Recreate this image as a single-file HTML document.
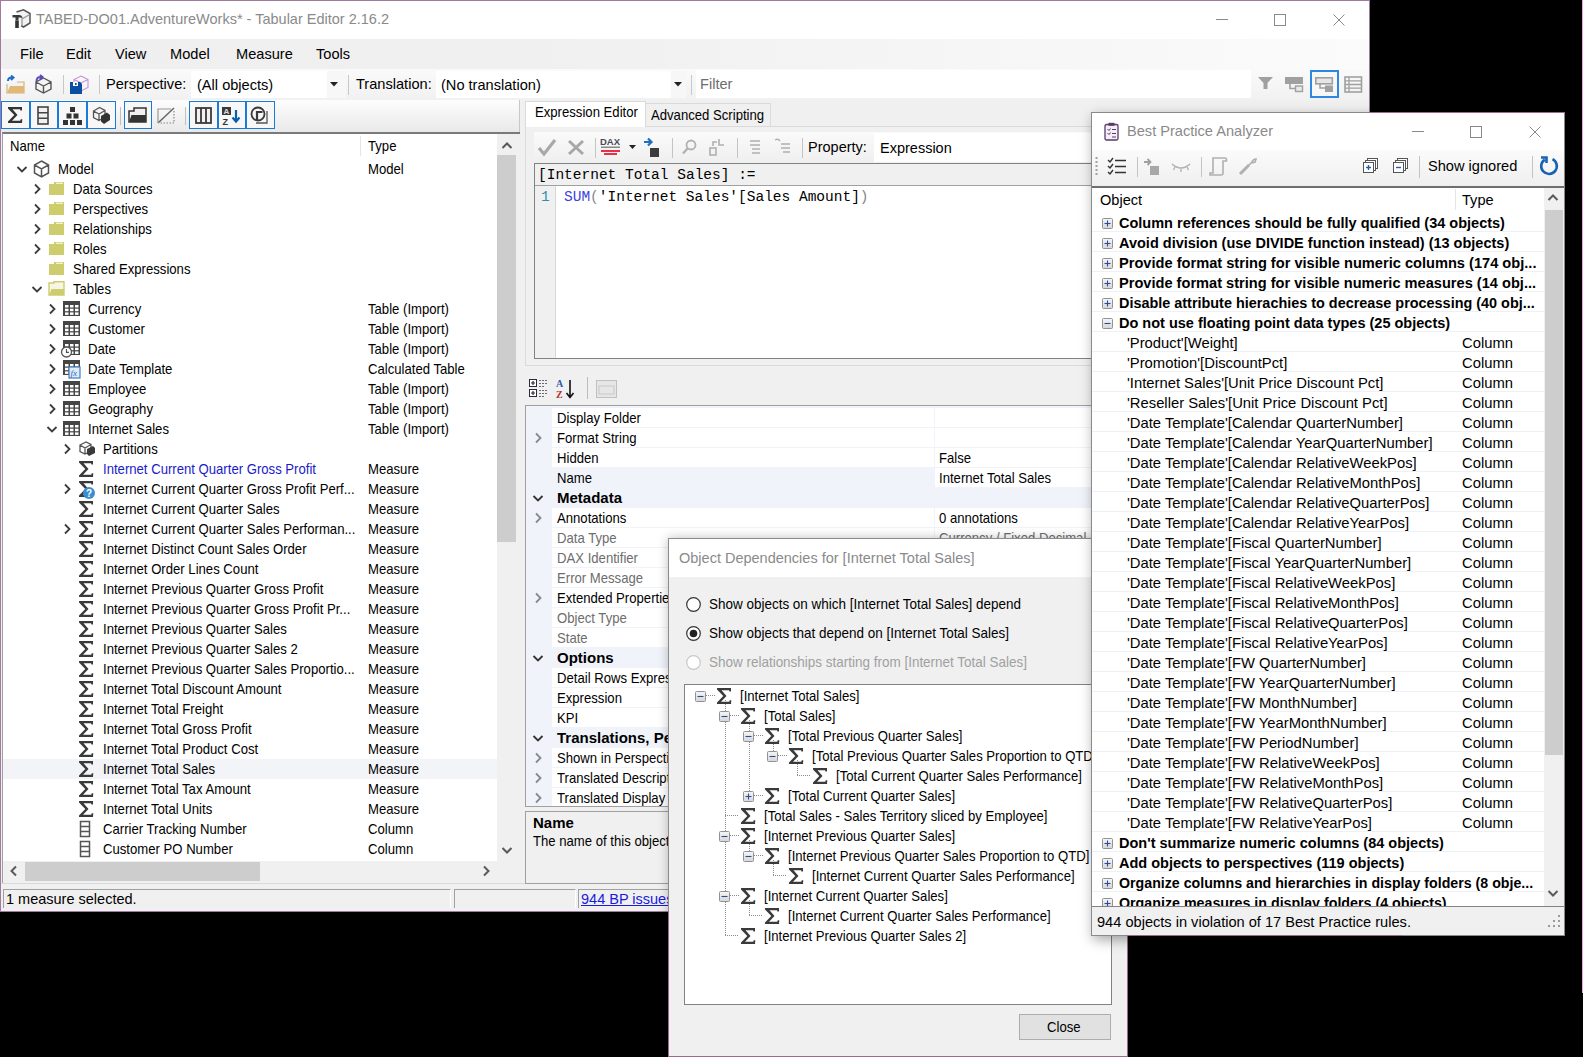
<!DOCTYPE html><html><head><meta charset="utf-8"><style>
*{margin:0;padding:0;box-sizing:border-box}
html,body{width:1583px;height:1057px;overflow:hidden;background:#000;position:relative;font-family:"Liberation Sans",sans-serif;color:#000}
.a{position:absolute}
.t{position:absolute;white-space:nowrap;font-size:15px;line-height:20px;transform:scaleX(0.875);transform-origin:0 0}
.s{position:absolute;white-space:nowrap;font-size:14.6px;line-height:20px}
.b{font-weight:bold}
svg{position:absolute;overflow:visible}
</style></head><body>
<div class="a" style="left:0;top:0;width:1370px;height:912px;background:#f0f0f0;border:1px solid #a07aa0"></div>
<div class="a" style="left:1px;top:1px;width:1368px;height:38px;background:#fff"></div>
<div class="s" style="left:36px;top:9px;color:#8a8a8a;font-size:14.5px">TABED-DO01.AdventureWorks* - Tabular Editor 2.16.2</div>
<svg style="left:1216px;top:19px" width="12" height="1" viewBox="0 0 12 1" ><rect width="12" height="1" fill="#8a8a8a"/></svg>
<svg style="left:1274px;top:14px" width="12" height="12" viewBox="0 0 12 12" ><rect x="0.5" y="0.5" width="11" height="11" fill="none" stroke="#8a8a8a" stroke-width="1"/></svg>
<svg style="left:1333px;top:14px" width="12" height="12" viewBox="0 0 12 12" ><path d="M0.5 0.5 L11.5 11.5 M11.5 0.5 L0.5 11.5" stroke="#8a8a8a" stroke-width="1"/></svg>
<div class="a" style="left:1px;top:39px;width:1368px;height:30px;background:linear-gradient(90deg,#efefef 0,#f0f0f0 40%,#fbfbfb 100%)"></div>
<div class="s" style="left:20px;top:44px;">File</div>
<div class="s" style="left:66px;top:44px;">Edit</div>
<div class="s" style="left:115px;top:44px;">View</div>
<div class="s" style="left:170px;top:44px;">Model</div>
<div class="s" style="left:236px;top:44px;">Measure</div>
<div class="s" style="left:316px;top:44px;">Tools</div>
<div class="a" style="left:1px;top:69px;width:1368px;height:31px;background:linear-gradient(#fafafa,#f1f1f1)"></div>
<div class="s" style="left:106px;top:74px;">Perspective:</div>
<div class="a" style="left:191px;top:71px;width:155px;height:27px;background:#fff"></div>
<div class="a" style="left:327px;top:71px;width:19px;height:27px;background:#f7f7f7"></div>
<svg style="left:330px;top:82px" width="8" height="5" viewBox="0 0 8 5" ><path d="M0 0 L8 0 L4 4.5 Z" fill="#222"/></svg>
<div class="s" style="left:197px;top:75px;">(All objects)</div>
<div class="a" style="left:348px;top:75px;width:1px;height:20px;background:#c8c8c8"></div>
<div class="s" style="left:356px;top:74px;">Translation:</div>
<div class="a" style="left:436px;top:71px;width:250px;height:27px;background:#fff"></div>
<div class="a" style="left:671px;top:71px;width:15px;height:27px;background:#f7f7f7"></div>
<svg style="left:674px;top:82px" width="8" height="5" viewBox="0 0 8 5" ><path d="M0 0 L8 0 L4 4.5 Z" fill="#222"/></svg>
<div class="s" style="left:441px;top:75px;">(No translation)</div>
<div class="a" style="left:691px;top:75px;width:1px;height:20px;background:#c8c8c8"></div>
<div class="a" style="left:696px;top:70px;width:555px;height:28px;background:#fff"></div>
<div class="s" style="left:700px;top:74px;color:#6d6d6d">Filter</div>
<div class="a" style="left:1px;top:100px;width:519px;height:32px;background:linear-gradient(#fdfdfd,#e9e9e9);border-right:1px solid #c8c8c8"></div>
<div class="a" style="left:1px;top:101px;width:29px;height:28px;border:1px solid #1a7ad8;background:#f7f7f7"></div>
<div class="a" style="left:30px;top:101px;width:28px;height:28px;border:1px solid #1a7ad8;background:#f7f7f7"></div>
<div class="a" style="left:58px;top:101px;width:29px;height:28px;border:1px solid #1a7ad8;background:#f7f7f7"></div>
<div class="a" style="left:87px;top:101px;width:29px;height:28px;border:1px solid #1a7ad8;background:#f7f7f7"></div>
<div class="a" style="left:124px;top:101px;width:28px;height:28px;border:1px solid #1a7ad8;background:#f7f7f7"></div>
<div class="a" style="left:189px;top:101px;width:29px;height:28px;border:1px solid #1a7ad8;background:#f7f7f7"></div>
<div class="a" style="left:218px;top:101px;width:28px;height:28px;border:1px solid #1a7ad8;background:#f7f7f7"></div>
<div class="a" style="left:246px;top:101px;width:29px;height:28px;border:1px solid #1a7ad8;background:#f7f7f7"></div>
<div class="a" style="left:120px;top:107px;width:1px;height:18px;background:#c0c0c0"></div>
<div class="a" style="left:185px;top:107px;width:1px;height:18px;background:#c0c0c0"></div>
<div class="a" style="left:2px;top:132px;width:518px;height:751px;background:#f0f0f0;border-top:2px solid #7a7a7a;border-left:1px solid #a0a0a0"></div>
<div class="a" style="left:3px;top:134px;width:494px;height:727px;background:#fff"></div>
<div class="t" style="left:10px;top:136px;">Name</div>
<div class="t" style="left:368px;top:136px;">Type</div>
<div class="a" style="left:360px;top:136px;width:1px;height:20px;background:#e5e5e5"></div>
<div class="a" style="left:497px;top:134px;width:20px;height:727px;background:#f0f0f0"></div>
<div class="a" style="left:497px;top:155px;width:19px;height:387px;background:#cdcdcd"></div>
<svg style="left:501px;top:142px" width="12" height="8" viewBox="0 0 12 8" ><path d="M1.5 6 L6 1.5 L10.5 6" fill="none" stroke="#5a5a5a" stroke-width="2"/></svg>
<svg style="left:501px;top:846px" width="12" height="8" viewBox="0 0 12 8" ><path d="M1.5 2 L6 6.5 L10.5 2" fill="none" stroke="#5a5a5a" stroke-width="2"/></svg>
<div class="a" style="left:3px;top:861px;width:494px;height:20px;background:#f0f0f0"></div>
<div class="a" style="left:25px;top:862px;width:235px;height:19px;background:#cdcdcd"></div>
<svg style="left:10px;top:865px" width="8" height="12" viewBox="0 0 8 12" ><path d="M6 1.5 L1.5 6 L6 10.5" fill="none" stroke="#5a5a5a" stroke-width="2"/></svg>
<svg style="left:482px;top:865px" width="8" height="12" viewBox="0 0 8 12" ><path d="M2 1.5 L6.5 6 L2 10.5" fill="none" stroke="#5a5a5a" stroke-width="2"/></svg>
<svg style="left:16px;top:165px" width="12" height="8" viewBox="0 0 12 8" ><path d="M1.5 2 L6 6.5 L10.5 2" fill="none" stroke="#3c3c3c" stroke-width="1.8"/></svg>
<svg style="left:33px;top:160px" width="17" height="18" viewBox="0 0 17 18" ><path d="M8.5 1 L15.5 5 L15.5 13 L8.5 17 L1.5 13 L1.5 5 Z M1.5 5 L8.5 9 L15.5 5 M8.5 9 L8.5 17" fill="none" stroke="#555" stroke-width="1.5"/></svg>
<div class="t" style="left:58px;top:159px;">Model</div>
<div class="t" style="left:368px;top:159px;">Model</div>
<svg style="left:33px;top:183px" width="8" height="12" viewBox="0 0 8 12" ><path d="M2 1.5 L6.5 6 L2 10.5" fill="none" stroke="#3c3c3c" stroke-width="1.8"/></svg>
<svg style="left:48px;top:181px" width="17" height="15" viewBox="0 0 17 15" ><path d="M1 3 L6 3 L6 1 L16 1 L16 14 L1 14 Z" fill="#cdcd6e"/><path d="M8 2.2 L15 2.2" stroke="#fff" stroke-width="1"/></svg>
<div class="t" style="left:73px;top:179px;">Data Sources</div>
<svg style="left:33px;top:203px" width="8" height="12" viewBox="0 0 8 12" ><path d="M2 1.5 L6.5 6 L2 10.5" fill="none" stroke="#3c3c3c" stroke-width="1.8"/></svg>
<svg style="left:48px;top:201px" width="17" height="15" viewBox="0 0 17 15" ><path d="M1 3 L6 3 L6 1 L16 1 L16 14 L1 14 Z" fill="#cdcd6e"/><path d="M8 2.2 L15 2.2" stroke="#fff" stroke-width="1"/></svg>
<div class="t" style="left:73px;top:199px;">Perspectives</div>
<svg style="left:33px;top:223px" width="8" height="12" viewBox="0 0 8 12" ><path d="M2 1.5 L6.5 6 L2 10.5" fill="none" stroke="#3c3c3c" stroke-width="1.8"/></svg>
<svg style="left:48px;top:221px" width="17" height="15" viewBox="0 0 17 15" ><path d="M1 3 L6 3 L6 1 L16 1 L16 14 L1 14 Z" fill="#cdcd6e"/><path d="M8 2.2 L15 2.2" stroke="#fff" stroke-width="1"/></svg>
<div class="t" style="left:73px;top:219px;">Relationships</div>
<svg style="left:33px;top:243px" width="8" height="12" viewBox="0 0 8 12" ><path d="M2 1.5 L6.5 6 L2 10.5" fill="none" stroke="#3c3c3c" stroke-width="1.8"/></svg>
<svg style="left:48px;top:241px" width="17" height="15" viewBox="0 0 17 15" ><path d="M1 3 L6 3 L6 1 L16 1 L16 14 L1 14 Z" fill="#cdcd6e"/><path d="M8 2.2 L15 2.2" stroke="#fff" stroke-width="1"/></svg>
<div class="t" style="left:73px;top:239px;">Roles</div>
<svg style="left:48px;top:261px" width="17" height="15" viewBox="0 0 17 15" ><path d="M1 3 L6 3 L6 1 L16 1 L16 14 L1 14 Z" fill="#cdcd6e"/><path d="M8 2.2 L15 2.2" stroke="#fff" stroke-width="1"/></svg>
<div class="t" style="left:73px;top:259px;">Shared Expressions</div>
<svg style="left:31px;top:285px" width="12" height="8" viewBox="0 0 12 8" ><path d="M1.5 2 L6 6.5 L10.5 2" fill="none" stroke="#3c3c3c" stroke-width="1.8"/></svg>
<svg style="left:48px;top:281px" width="17" height="15" viewBox="0 0 17 15" ><path d="M1 2 L6 2 L6 0.8 L16 0.8 L16 14 L1 14 Z" fill="#f6f6e6" stroke="#cdcd6e" stroke-width="1.4"/><path d="M1 14 L3.5 8 L16 8 L16 14 Z" fill="#cdcd6e"/></svg>
<div class="t" style="left:73px;top:279px;">Tables</div>
<svg style="left:48px;top:303px" width="8" height="12" viewBox="0 0 8 12" ><path d="M2 1.5 L6.5 6 L2 10.5" fill="none" stroke="#3c3c3c" stroke-width="1.8"/></svg>
<svg style="left:63px;top:301px" width="17" height="15" viewBox="0 0 17 15" ><rect x="0" y="0" width="17" height="15" fill="#454545"/><rect x="2" y="4.0" width="3.5" height="2.5" fill="#fff"/><rect x="7" y="4.0" width="3.5" height="2.5" fill="#fff"/><rect x="12" y="4.0" width="3.5" height="2.5" fill="#fff"/><rect x="2" y="7.7" width="3.5" height="2.5" fill="#fff"/><rect x="7" y="7.7" width="3.5" height="2.5" fill="#fff"/><rect x="12" y="7.7" width="3.5" height="2.5" fill="#fff"/><rect x="2" y="11.4" width="3.5" height="2.5" fill="#fff"/><rect x="7" y="11.4" width="3.5" height="2.5" fill="#fff"/><rect x="12" y="11.4" width="3.5" height="2.5" fill="#fff"/></svg>
<div class="t" style="left:88px;top:299px;">Currency</div>
<div class="t" style="left:368px;top:299px;">Table (Import)</div>
<svg style="left:48px;top:323px" width="8" height="12" viewBox="0 0 8 12" ><path d="M2 1.5 L6.5 6 L2 10.5" fill="none" stroke="#3c3c3c" stroke-width="1.8"/></svg>
<svg style="left:63px;top:321px" width="17" height="15" viewBox="0 0 17 15" ><rect x="0" y="0" width="17" height="15" fill="#454545"/><rect x="2" y="4.0" width="3.5" height="2.5" fill="#fff"/><rect x="7" y="4.0" width="3.5" height="2.5" fill="#fff"/><rect x="12" y="4.0" width="3.5" height="2.5" fill="#fff"/><rect x="2" y="7.7" width="3.5" height="2.5" fill="#fff"/><rect x="7" y="7.7" width="3.5" height="2.5" fill="#fff"/><rect x="12" y="7.7" width="3.5" height="2.5" fill="#fff"/><rect x="2" y="11.4" width="3.5" height="2.5" fill="#fff"/><rect x="7" y="11.4" width="3.5" height="2.5" fill="#fff"/><rect x="12" y="11.4" width="3.5" height="2.5" fill="#fff"/></svg>
<div class="t" style="left:88px;top:319px;">Customer</div>
<div class="t" style="left:368px;top:319px;">Table (Import)</div>
<svg style="left:48px;top:343px" width="8" height="12" viewBox="0 0 8 12" ><path d="M2 1.5 L6.5 6 L2 10.5" fill="none" stroke="#3c3c3c" stroke-width="1.8"/></svg>
<svg style="left:61px;top:340px" width="19" height="18" viewBox="0 0 19 18" ><g transform="translate(2,0)"><rect x="0" y="0" width="17" height="15" fill="#454545"/><rect x="2" y="4.0" width="3.5" height="2.5" fill="#fff"/><rect x="7" y="4.0" width="3.5" height="2.5" fill="#fff"/><rect x="12" y="4.0" width="3.5" height="2.5" fill="#fff"/><rect x="2" y="7.7" width="3.5" height="2.5" fill="#fff"/><rect x="7" y="7.7" width="3.5" height="2.5" fill="#fff"/><rect x="12" y="7.7" width="3.5" height="2.5" fill="#fff"/><rect x="2" y="11.4" width="3.5" height="2.5" fill="#fff"/><rect x="7" y="11.4" width="3.5" height="2.5" fill="#fff"/><rect x="12" y="11.4" width="3.5" height="2.5" fill="#fff"/><circle cx="3.5" cy="12" r="5" fill="#fff" stroke="#555" stroke-width="1.3"/><path d="M3.5 9 L3.5 12.3 L6 12.3" fill="none" stroke="#555" stroke-width="1.2"/></g></svg>
<div class="t" style="left:88px;top:339px;">Date</div>
<div class="t" style="left:368px;top:339px;">Table (Import)</div>
<svg style="left:48px;top:363px" width="8" height="12" viewBox="0 0 8 12" ><path d="M2 1.5 L6.5 6 L2 10.5" fill="none" stroke="#3c3c3c" stroke-width="1.8"/></svg>
<svg style="left:63px;top:360px" width="18" height="19" viewBox="0 0 18 19" ><rect x="0" y="0" width="17" height="15" fill="#454545"/><rect x="2" y="4.0" width="3.5" height="2.5" fill="#fff"/><rect x="7" y="4.0" width="3.5" height="2.5" fill="#fff"/><rect x="12" y="4.0" width="3.5" height="2.5" fill="#fff"/><rect x="2" y="7.7" width="3.5" height="2.5" fill="#fff"/><rect x="7" y="7.7" width="3.5" height="2.5" fill="#fff"/><rect x="12" y="7.7" width="3.5" height="2.5" fill="#fff"/><rect x="2" y="11.4" width="3.5" height="2.5" fill="#fff"/><rect x="7" y="11.4" width="3.5" height="2.5" fill="#fff"/><rect x="12" y="11.4" width="3.5" height="2.5" fill="#fff"/><rect x="6" y="7" width="11" height="11" fill="#dfeaf7" stroke="#3d7fc4" stroke-width="1.2"/><text x="7.5" y="16" font-size="9" font-style="italic" fill="#2e6db5" font-family="Liberation Serif">fx</text></svg>
<div class="t" style="left:88px;top:359px;">Date Template</div>
<div class="t" style="left:368px;top:359px;">Calculated Table</div>
<svg style="left:48px;top:383px" width="8" height="12" viewBox="0 0 8 12" ><path d="M2 1.5 L6.5 6 L2 10.5" fill="none" stroke="#3c3c3c" stroke-width="1.8"/></svg>
<svg style="left:63px;top:381px" width="17" height="15" viewBox="0 0 17 15" ><rect x="0" y="0" width="17" height="15" fill="#454545"/><rect x="2" y="4.0" width="3.5" height="2.5" fill="#fff"/><rect x="7" y="4.0" width="3.5" height="2.5" fill="#fff"/><rect x="12" y="4.0" width="3.5" height="2.5" fill="#fff"/><rect x="2" y="7.7" width="3.5" height="2.5" fill="#fff"/><rect x="7" y="7.7" width="3.5" height="2.5" fill="#fff"/><rect x="12" y="7.7" width="3.5" height="2.5" fill="#fff"/><rect x="2" y="11.4" width="3.5" height="2.5" fill="#fff"/><rect x="7" y="11.4" width="3.5" height="2.5" fill="#fff"/><rect x="12" y="11.4" width="3.5" height="2.5" fill="#fff"/></svg>
<div class="t" style="left:88px;top:379px;">Employee</div>
<div class="t" style="left:368px;top:379px;">Table (Import)</div>
<svg style="left:48px;top:403px" width="8" height="12" viewBox="0 0 8 12" ><path d="M2 1.5 L6.5 6 L2 10.5" fill="none" stroke="#3c3c3c" stroke-width="1.8"/></svg>
<svg style="left:63px;top:401px" width="17" height="15" viewBox="0 0 17 15" ><rect x="0" y="0" width="17" height="15" fill="#454545"/><rect x="2" y="4.0" width="3.5" height="2.5" fill="#fff"/><rect x="7" y="4.0" width="3.5" height="2.5" fill="#fff"/><rect x="12" y="4.0" width="3.5" height="2.5" fill="#fff"/><rect x="2" y="7.7" width="3.5" height="2.5" fill="#fff"/><rect x="7" y="7.7" width="3.5" height="2.5" fill="#fff"/><rect x="12" y="7.7" width="3.5" height="2.5" fill="#fff"/><rect x="2" y="11.4" width="3.5" height="2.5" fill="#fff"/><rect x="7" y="11.4" width="3.5" height="2.5" fill="#fff"/><rect x="12" y="11.4" width="3.5" height="2.5" fill="#fff"/></svg>
<div class="t" style="left:88px;top:399px;">Geography</div>
<div class="t" style="left:368px;top:399px;">Table (Import)</div>
<svg style="left:46px;top:425px" width="12" height="8" viewBox="0 0 12 8" ><path d="M1.5 2 L6 6.5 L10.5 2" fill="none" stroke="#3c3c3c" stroke-width="1.8"/></svg>
<svg style="left:63px;top:421px" width="17" height="15" viewBox="0 0 17 15" ><rect x="0" y="0" width="17" height="15" fill="#454545"/><rect x="2" y="4.0" width="3.5" height="2.5" fill="#fff"/><rect x="7" y="4.0" width="3.5" height="2.5" fill="#fff"/><rect x="12" y="4.0" width="3.5" height="2.5" fill="#fff"/><rect x="2" y="7.7" width="3.5" height="2.5" fill="#fff"/><rect x="7" y="7.7" width="3.5" height="2.5" fill="#fff"/><rect x="12" y="7.7" width="3.5" height="2.5" fill="#fff"/><rect x="2" y="11.4" width="3.5" height="2.5" fill="#fff"/><rect x="7" y="11.4" width="3.5" height="2.5" fill="#fff"/><rect x="12" y="11.4" width="3.5" height="2.5" fill="#fff"/></svg>
<div class="t" style="left:88px;top:419px;">Internet Sales</div>
<div class="t" style="left:368px;top:419px;">Table (Import)</div>
<svg style="left:63px;top:443px" width="8" height="12" viewBox="0 0 8 12" ><path d="M2 1.5 L6.5 6 L2 10.5" fill="none" stroke="#3c3c3c" stroke-width="1.8"/></svg>
<svg style="left:78px;top:440px" width="18" height="17" viewBox="0 0 18 17" ><path d="M2 5 L8 2 L13 4.5 L13 11 L7 14 L2 11.5 Z M2 5 L7 8 L13 4.5 M7 8 L7 14" fill="none" stroke="#555" stroke-width="1.3"/><path d="M9 9 L15 6 L17 8 L17 13 L11 16 L9 14 Z" fill="#3a3a3a"/></svg>
<div class="t" style="left:103px;top:439px;">Partitions</div>
<svg style="left:78px;top:460px" width="16" height="18" viewBox="0 0 16 18" ><path d="M1 1 L15 1 L15 4.5 L13.5 4.5 L13 3.2 L5.5 3.2 L10.5 9 L5 14.8 L13.2 14.8 L13.8 13.2 L15.3 13.2 L15 17 L1 17 L1 15.5 L7.3 9 L1 2.5 Z" fill="#3a3a3a"/></svg>
<div class="t" style="left:103px;top:459px;color:#1a1ac8">Internet Current Quarter Gross Profit</div>
<div class="t" style="left:368px;top:459px;">Measure</div>
<svg style="left:63px;top:483px" width="8" height="12" viewBox="0 0 8 12" ><path d="M2 1.5 L6.5 6 L2 10.5" fill="none" stroke="#3c3c3c" stroke-width="1.8"/></svg>
<svg style="left:78px;top:480px" width="16" height="18" viewBox="0 0 16 18" ><path d="M1 1 L15 1 L15 4.5 L13.5 4.5 L13 3.2 L5.5 3.2 L10.5 9 L5 14.8 L13.2 14.8 L13.8 13.2 L15.3 13.2 L15 17 L1 17 L1 15.5 L7.3 9 L1 2.5 Z" fill="#3a3a3a"/></svg><svg style="left:83px;top:487px" width="12" height="12" viewBox="0 0 12 12" ><circle cx="6" cy="6" r="6" fill="#3b8fd0"/><text x="3" y="10" font-size="10" font-weight="bold" fill="#fff" font-family="Liberation Sans">?</text></svg>
<div class="t" style="left:103px;top:479px;">Internet Current Quarter Gross Profit Perf...</div>
<div class="t" style="left:368px;top:479px;">Measure</div>
<svg style="left:78px;top:500px" width="16" height="18" viewBox="0 0 16 18" ><path d="M1 1 L15 1 L15 4.5 L13.5 4.5 L13 3.2 L5.5 3.2 L10.5 9 L5 14.8 L13.2 14.8 L13.8 13.2 L15.3 13.2 L15 17 L1 17 L1 15.5 L7.3 9 L1 2.5 Z" fill="#3a3a3a"/></svg>
<div class="t" style="left:103px;top:499px;">Internet Current Quarter Sales</div>
<div class="t" style="left:368px;top:499px;">Measure</div>
<svg style="left:63px;top:523px" width="8" height="12" viewBox="0 0 8 12" ><path d="M2 1.5 L6.5 6 L2 10.5" fill="none" stroke="#3c3c3c" stroke-width="1.8"/></svg>
<svg style="left:78px;top:520px" width="16" height="18" viewBox="0 0 16 18" ><path d="M1 1 L15 1 L15 4.5 L13.5 4.5 L13 3.2 L5.5 3.2 L10.5 9 L5 14.8 L13.2 14.8 L13.8 13.2 L15.3 13.2 L15 17 L1 17 L1 15.5 L7.3 9 L1 2.5 Z" fill="#3a3a3a"/></svg>
<div class="t" style="left:103px;top:519px;">Internet Current Quarter Sales Performan...</div>
<div class="t" style="left:368px;top:519px;">Measure</div>
<svg style="left:78px;top:540px" width="16" height="18" viewBox="0 0 16 18" ><path d="M1 1 L15 1 L15 4.5 L13.5 4.5 L13 3.2 L5.5 3.2 L10.5 9 L5 14.8 L13.2 14.8 L13.8 13.2 L15.3 13.2 L15 17 L1 17 L1 15.5 L7.3 9 L1 2.5 Z" fill="#3a3a3a"/></svg>
<div class="t" style="left:103px;top:539px;">Internet Distinct Count Sales Order</div>
<div class="t" style="left:368px;top:539px;">Measure</div>
<svg style="left:78px;top:560px" width="16" height="18" viewBox="0 0 16 18" ><path d="M1 1 L15 1 L15 4.5 L13.5 4.5 L13 3.2 L5.5 3.2 L10.5 9 L5 14.8 L13.2 14.8 L13.8 13.2 L15.3 13.2 L15 17 L1 17 L1 15.5 L7.3 9 L1 2.5 Z" fill="#3a3a3a"/></svg>
<div class="t" style="left:103px;top:559px;">Internet Order Lines Count</div>
<div class="t" style="left:368px;top:559px;">Measure</div>
<svg style="left:78px;top:580px" width="16" height="18" viewBox="0 0 16 18" ><path d="M1 1 L15 1 L15 4.5 L13.5 4.5 L13 3.2 L5.5 3.2 L10.5 9 L5 14.8 L13.2 14.8 L13.8 13.2 L15.3 13.2 L15 17 L1 17 L1 15.5 L7.3 9 L1 2.5 Z" fill="#3a3a3a"/></svg>
<div class="t" style="left:103px;top:579px;">Internet Previous Quarter Gross Profit</div>
<div class="t" style="left:368px;top:579px;">Measure</div>
<svg style="left:78px;top:600px" width="16" height="18" viewBox="0 0 16 18" ><path d="M1 1 L15 1 L15 4.5 L13.5 4.5 L13 3.2 L5.5 3.2 L10.5 9 L5 14.8 L13.2 14.8 L13.8 13.2 L15.3 13.2 L15 17 L1 17 L1 15.5 L7.3 9 L1 2.5 Z" fill="#3a3a3a"/></svg>
<div class="t" style="left:103px;top:599px;">Internet Previous Quarter Gross Profit Pr...</div>
<div class="t" style="left:368px;top:599px;">Measure</div>
<svg style="left:78px;top:620px" width="16" height="18" viewBox="0 0 16 18" ><path d="M1 1 L15 1 L15 4.5 L13.5 4.5 L13 3.2 L5.5 3.2 L10.5 9 L5 14.8 L13.2 14.8 L13.8 13.2 L15.3 13.2 L15 17 L1 17 L1 15.5 L7.3 9 L1 2.5 Z" fill="#3a3a3a"/></svg>
<div class="t" style="left:103px;top:619px;">Internet Previous Quarter Sales</div>
<div class="t" style="left:368px;top:619px;">Measure</div>
<svg style="left:78px;top:640px" width="16" height="18" viewBox="0 0 16 18" ><path d="M1 1 L15 1 L15 4.5 L13.5 4.5 L13 3.2 L5.5 3.2 L10.5 9 L5 14.8 L13.2 14.8 L13.8 13.2 L15.3 13.2 L15 17 L1 17 L1 15.5 L7.3 9 L1 2.5 Z" fill="#3a3a3a"/></svg>
<div class="t" style="left:103px;top:639px;">Internet Previous Quarter Sales 2</div>
<div class="t" style="left:368px;top:639px;">Measure</div>
<svg style="left:78px;top:660px" width="16" height="18" viewBox="0 0 16 18" ><path d="M1 1 L15 1 L15 4.5 L13.5 4.5 L13 3.2 L5.5 3.2 L10.5 9 L5 14.8 L13.2 14.8 L13.8 13.2 L15.3 13.2 L15 17 L1 17 L1 15.5 L7.3 9 L1 2.5 Z" fill="#3a3a3a"/></svg>
<div class="t" style="left:103px;top:659px;">Internet Previous Quarter Sales Proportio...</div>
<div class="t" style="left:368px;top:659px;">Measure</div>
<svg style="left:78px;top:680px" width="16" height="18" viewBox="0 0 16 18" ><path d="M1 1 L15 1 L15 4.5 L13.5 4.5 L13 3.2 L5.5 3.2 L10.5 9 L5 14.8 L13.2 14.8 L13.8 13.2 L15.3 13.2 L15 17 L1 17 L1 15.5 L7.3 9 L1 2.5 Z" fill="#3a3a3a"/></svg>
<div class="t" style="left:103px;top:679px;">Internet Total Discount Amount</div>
<div class="t" style="left:368px;top:679px;">Measure</div>
<svg style="left:78px;top:700px" width="16" height="18" viewBox="0 0 16 18" ><path d="M1 1 L15 1 L15 4.5 L13.5 4.5 L13 3.2 L5.5 3.2 L10.5 9 L5 14.8 L13.2 14.8 L13.8 13.2 L15.3 13.2 L15 17 L1 17 L1 15.5 L7.3 9 L1 2.5 Z" fill="#3a3a3a"/></svg>
<div class="t" style="left:103px;top:699px;">Internet Total Freight</div>
<div class="t" style="left:368px;top:699px;">Measure</div>
<svg style="left:78px;top:720px" width="16" height="18" viewBox="0 0 16 18" ><path d="M1 1 L15 1 L15 4.5 L13.5 4.5 L13 3.2 L5.5 3.2 L10.5 9 L5 14.8 L13.2 14.8 L13.8 13.2 L15.3 13.2 L15 17 L1 17 L1 15.5 L7.3 9 L1 2.5 Z" fill="#3a3a3a"/></svg>
<div class="t" style="left:103px;top:719px;">Internet Total Gross Profit</div>
<div class="t" style="left:368px;top:719px;">Measure</div>
<svg style="left:78px;top:740px" width="16" height="18" viewBox="0 0 16 18" ><path d="M1 1 L15 1 L15 4.5 L13.5 4.5 L13 3.2 L5.5 3.2 L10.5 9 L5 14.8 L13.2 14.8 L13.8 13.2 L15.3 13.2 L15 17 L1 17 L1 15.5 L7.3 9 L1 2.5 Z" fill="#3a3a3a"/></svg>
<div class="t" style="left:103px;top:739px;">Internet Total Product Cost</div>
<div class="t" style="left:368px;top:739px;">Measure</div>
<div class="a" style="left:3px;top:759px;width:494px;height:20px;background:#f2f4f8"></div>
<svg style="left:78px;top:760px" width="16" height="18" viewBox="0 0 16 18" ><path d="M1 1 L15 1 L15 4.5 L13.5 4.5 L13 3.2 L5.5 3.2 L10.5 9 L5 14.8 L13.2 14.8 L13.8 13.2 L15.3 13.2 L15 17 L1 17 L1 15.5 L7.3 9 L1 2.5 Z" fill="#3a3a3a"/></svg>
<div class="t" style="left:103px;top:759px;">Internet Total Sales</div>
<div class="t" style="left:368px;top:759px;">Measure</div>
<svg style="left:78px;top:780px" width="16" height="18" viewBox="0 0 16 18" ><path d="M1 1 L15 1 L15 4.5 L13.5 4.5 L13 3.2 L5.5 3.2 L10.5 9 L5 14.8 L13.2 14.8 L13.8 13.2 L15.3 13.2 L15 17 L1 17 L1 15.5 L7.3 9 L1 2.5 Z" fill="#3a3a3a"/></svg>
<div class="t" style="left:103px;top:779px;">Internet Total Tax Amount</div>
<div class="t" style="left:368px;top:779px;">Measure</div>
<svg style="left:78px;top:800px" width="16" height="18" viewBox="0 0 16 18" ><path d="M1 1 L15 1 L15 4.5 L13.5 4.5 L13 3.2 L5.5 3.2 L10.5 9 L5 14.8 L13.2 14.8 L13.8 13.2 L15.3 13.2 L15 17 L1 17 L1 15.5 L7.3 9 L1 2.5 Z" fill="#3a3a3a"/></svg>
<div class="t" style="left:103px;top:799px;">Internet Total Units</div>
<div class="t" style="left:368px;top:799px;">Measure</div>
<svg style="left:79px;top:820px" width="12" height="18" viewBox="0 0 12 18" ><rect x="1.5" y="1.5" width="9" height="15" fill="none" stroke="#555" stroke-width="1.5"/><path d="M1.5 6.5 L10.5 6.5 M1.5 11.5 L10.5 11.5" stroke="#555" stroke-width="1.5"/></svg>
<div class="t" style="left:103px;top:819px;">Carrier Tracking Number</div>
<div class="t" style="left:368px;top:819px;">Column</div>
<svg style="left:79px;top:840px" width="12" height="18" viewBox="0 0 12 18" ><rect x="1.5" y="1.5" width="9" height="15" fill="none" stroke="#555" stroke-width="1.5"/><path d="M1.5 6.5 L10.5 6.5 M1.5 11.5 L10.5 11.5" stroke="#555" stroke-width="1.5"/></svg>
<div class="t" style="left:103px;top:839px;">Customer PO Number</div>
<div class="t" style="left:368px;top:839px;">Column</div>
<div class="a" style="left:1px;top:883px;width:1368px;height:28px;background:#f0f0f0;border-top:1px solid #dadada"></div>
<div class="a" style="left:3px;top:889px;width:448px;height:19px;border-top:1px solid #a0a0a0;border-left:1px solid #a0a0a0;border-right:1px solid #fff"></div>
<div class="a" style="left:454px;top:889px;width:122px;height:19px;border-top:1px solid #a0a0a0;border-left:1px solid #a0a0a0;border-right:1px solid #fff"></div>
<div class="a" style="left:578px;top:889px;width:300px;height:19px;border-top:1px solid #a0a0a0;border-left:1px solid #a0a0a0"></div>
<div class="s" style="left:6px;top:889px;font-size:14.5px">1 measure selected.</div>
<div class="s" style="left:581px;top:889px;color:#1a1ae0;text-decoration:underline;font-size:14.5px">944 BP issues</div>
<div class="a" style="left:520px;top:100px;width:849px;height:783px;background:#f0f0f0"></div>
<div class="a" style="left:525px;top:126px;width:844px;height:240px;border:1px solid #dadada;background:#f0f0f0"></div>
<div class="a" style="left:525px;top:101px;width:121px;height:26px;background:#fff;border:1px solid #dadada;border-bottom:none"></div>
<div class="a" style="left:645px;top:103px;width:126px;height:23px;background:#f0f0f0;border:1px solid #dadada;border-bottom:none"></div>
<div class="t" style="left:535px;top:102px;">Expression Editor</div>
<div class="t" style="left:651px;top:105px;">Advanced Scripting</div>
<div class="a" style="left:534px;top:132px;width:835px;height:31px;background:linear-gradient(#fafafa,#efefef)"></div>
<svg style="left:538px;top:139px" width="18" height="16" viewBox="0 0 18 16" ><path d="M1 9 L6 15 L17 1" fill="none" stroke="#a8a8a8" stroke-width="3.2"/></svg>
<svg style="left:567px;top:139px" width="18" height="17" viewBox="0 0 18 17" ><path d="M2 2 L16 15 M16 2 L2 15" fill="none" stroke="#a8a8a8" stroke-width="3"/></svg>
<div class="a" style="left:595px;top:138px;width:1px;height:20px;background:#c4c4c4"></div>
<svg style="left:600px;top:136px" width="22" height="22" viewBox="0 0 22 22" ><text x="0" y="9" font-size="9.5" font-weight="bold" fill="#4a4a5a" font-family="Liberation Sans">DAX</text><rect x="1" y="10.5" width="19" height="1.5" fill="#888"/><path d="M1 15 L20 15 M4 18 L17 18" stroke="#e8304a" stroke-width="2"/></svg>
<svg style="left:629px;top:145px" width="7" height="4" viewBox="0 0 7 4" ><path d="M0 0 L7 0 L3.5 4 Z" fill="#222"/></svg>
<svg style="left:643px;top:136px" width="16" height="22" viewBox="0 0 16 22" ><path d="M1 6 L8 6 M5 2.5 L8.5 6 L5 9.5" fill="none" stroke="#1f6fc0" stroke-width="2.2"/><rect x="7" y="12" width="9" height="9" fill="#3c3c3c"/></svg>
<div class="a" style="left:672px;top:138px;width:1px;height:20px;background:#c4c4c4"></div>
<svg style="left:682px;top:139px" width="15" height="16" viewBox="0 0 15 16" ><circle cx="9" cy="6" r="4.5" fill="none" stroke="#b0b0b0" stroke-width="1.8"/><path d="M5.5 9.5 L1 14.5" stroke="#b0b0b0" stroke-width="2.2"/></svg>
<svg style="left:709px;top:137px" width="17" height="19" viewBox="0 0 17 19" ><rect x="1" y="11" width="6" height="7" fill="none" stroke="#b0b0b0" stroke-width="1.6"/><path d="M10 2 L10 8 L15 8 M4 9 L4 5 L8 5" fill="none" stroke="#b0b0b0" stroke-width="1.6"/></svg>
<div class="a" style="left:737px;top:138px;width:1px;height:20px;background:#c4c4c4"></div>
<svg style="left:746px;top:140px" width="15" height="15" viewBox="0 0 15 15" ><path d="M4 1 L14 1 M4 5 L14 5 M6 9 L14 9 M6 13 L14 13" stroke="#b0b0b0" stroke-width="1.6"/></svg>
<svg style="left:774px;top:138px" width="17" height="17" viewBox="0 0 17 17" ><path d="M7 6 L16 6 M7 10 L16 10 M9 14 L16 14" stroke="#b0b0b0" stroke-width="1.6"/><path d="M1 2 Q4 0 6 3" fill="none" stroke="#b0b0b0" stroke-width="1.4"/></svg>
<div class="a" style="left:802px;top:138px;width:1px;height:20px;background:#c4c4c4"></div>
<div class="s" style="left:808px;top:137px;font-size:14.5px">Property:</div>
<div class="a" style="left:874px;top:133px;width:495px;height:29px;background:#fff"></div>
<div class="s" style="left:880px;top:138px;font-size:14.5px">Expression</div>
<div class="a" style="left:534px;top:163px;width:835px;height:196px;background:#fff;border:1px solid #828282"></div>
<div class="a" style="left:535px;top:164px;width:834px;height:22px;background:#f0f0f0;border-bottom:1px solid #a0a0a0"></div>
<div class="a" style="left:538px;top:165px;font-family:Liberation Mono,monospace;font-size:14.5px;line-height:20px;white-space:pre">[Internet Total Sales] :=</div>
<div class="a" style="left:535px;top:186px;width:21px;height:172px;background:#f0f0f0;border-right:1px solid #d8d8d8"></div>
<div class="a" style="left:541px;top:187px;font-family:Liberation Mono,monospace;font-size:14.5px;line-height:20px;color:#2b91af">1</div>
<div class="a" style="left:564px;top:187px;font-family:'Liberation Mono',monospace;font-size:14.5px;line-height:20px;white-space:pre"><span style="color:#4040e0">SUM</span><span style="color:#888">(</span>'Internet Sales'[Sales Amount]<span style="color:#888">)</span></div>
<svg style="left:529px;top:379px" width="20" height="20" viewBox="0 0 20 20" ><rect x="0.5" y="0.5" width="7" height="7" fill="#fff" stroke="#2a2a3a" stroke-width="1"/><rect x="0.5" y="10.5" width="7" height="7" fill="#fff" stroke="#2a2a3a" stroke-width="1"/><path d="M2 4 L6 4 M4 2 L4 6 M2 14 L6 14 M4 12 L4 16" stroke="#2a2a3a" stroke-width="1.2"/><path d="M10 1.5 L19 1.5 M10 4.5 L19 4.5 M10 7.5 L15 7.5 M10 11.5 L19 11.5 M10 14.5 L19 14.5 M10 17.5 L15 17.5" stroke="#6a6a7a" stroke-width="1.2" stroke-dasharray="2 1"/></svg>
<svg style="left:556px;top:378px" width="22" height="22" viewBox="0 0 22 22" ><text x="0" y="9" font-size="10" font-weight="bold" fill="#2a5cb8" font-family="Liberation Serif">A</text><text x="0" y="20" font-size="10" font-weight="bold" fill="#b83030" font-family="Liberation Serif">Z</text><path d="M14 2 L14 19 M10.5 15 L14 19.5 L17.5 15" fill="none" stroke="#111" stroke-width="1.6"/></svg>
<div class="a" style="left:587px;top:377px;width:1px;height:22px;background:#bdbdbd"></div>
<svg style="left:596px;top:380px" width="22" height="18" viewBox="0 0 22 18" ><rect x="0.5" y="0.5" width="20" height="17" fill="#e6e6e6" stroke="#c0c0c0"/><rect x="3" y="6" width="15" height="8" fill="none" stroke="#c8c8c8"/></svg>
<div class="a" style="left:525px;top:405px;width:844px;height:404px;background:#f0f4fa;border-top:1px solid #a0a0a0;border-left:1px solid #a0a0a0"></div>
<div class="a" style="left:552px;top:408px;width:817px;height:19px;background:#fff"></div>
<div class="a" style="left:934px;top:408px;width:1px;height:19px;background:#f0f4fa"></div>
<div class="t" style="left:557px;top:408px;">Display Folder</div>
<div class="a" style="left:552px;top:428px;width:817px;height:19px;background:#fff"></div>
<div class="a" style="left:934px;top:428px;width:1px;height:19px;background:#f0f4fa"></div>
<div class="t" style="left:557px;top:428px;">Format String</div>
<svg style="left:534px;top:432px" width="8" height="12" viewBox="0 0 8 12" ><path d="M2 1.5 L6.5 6 L2 10.5" fill="none" stroke="#888" stroke-width="1.8"/></svg>
<div class="a" style="left:552px;top:448px;width:817px;height:19px;background:#fff"></div>
<div class="a" style="left:934px;top:448px;width:1px;height:19px;background:#f0f4fa"></div>
<div class="t" style="left:557px;top:448px;">Hidden</div>
<div class="t" style="left:939px;top:448px;">False</div>
<div class="a" style="left:552px;top:468px;width:817px;height:19px;background:#fff"></div>
<div class="a" style="left:552px;top:468px;width:382px;height:19px;background:#f0f4fa"></div>
<div class="a" style="left:934px;top:468px;width:1px;height:19px;background:#f0f4fa"></div>
<div class="t" style="left:557px;top:468px;">Name</div>
<div class="t" style="left:939px;top:468px;">Internet Total Sales</div>
<div class="a" style="left:526px;top:488px;width:843px;height:20px;background:#f0f4fa"></div>
<div class="t" style="left:557px;top:488px;font-weight:bold;transform:none">Metadata</div>
<svg style="left:532px;top:494px" width="12" height="8" viewBox="0 0 12 8" ><path d="M1.5 2 L6 6.5 L10.5 2" fill="none" stroke="#333" stroke-width="1.8"/></svg>
<div class="a" style="left:552px;top:508px;width:817px;height:19px;background:#fff"></div>
<div class="a" style="left:934px;top:508px;width:1px;height:19px;background:#f0f4fa"></div>
<div class="t" style="left:557px;top:508px;">Annotations</div>
<div class="t" style="left:939px;top:508px;">0 annotations</div>
<svg style="left:534px;top:512px" width="8" height="12" viewBox="0 0 8 12" ><path d="M2 1.5 L6.5 6 L2 10.5" fill="none" stroke="#888" stroke-width="1.8"/></svg>
<div class="a" style="left:552px;top:528px;width:817px;height:19px;background:#fff"></div>
<div class="a" style="left:934px;top:528px;width:1px;height:19px;background:#f0f4fa"></div>
<div class="t" style="left:557px;top:528px;color:#6d6d6d">Data Type</div>
<div class="t" style="left:939px;top:528px;color:#6d6d6d">Currency / Fixed Decimal</div>
<div class="a" style="left:552px;top:548px;width:817px;height:19px;background:#fff"></div>
<div class="a" style="left:934px;top:548px;width:1px;height:19px;background:#f0f4fa"></div>
<div class="t" style="left:557px;top:548px;color:#6d6d6d">DAX Identifier</div>
<div class="a" style="left:552px;top:568px;width:817px;height:19px;background:#fff"></div>
<div class="a" style="left:934px;top:568px;width:1px;height:19px;background:#f0f4fa"></div>
<div class="t" style="left:557px;top:568px;color:#6d6d6d">Error Message</div>
<div class="a" style="left:552px;top:588px;width:817px;height:19px;background:#fff"></div>
<div class="a" style="left:934px;top:588px;width:1px;height:19px;background:#f0f4fa"></div>
<div class="t" style="left:557px;top:588px;">Extended Properties</div>
<svg style="left:534px;top:592px" width="8" height="12" viewBox="0 0 8 12" ><path d="M2 1.5 L6.5 6 L2 10.5" fill="none" stroke="#888" stroke-width="1.8"/></svg>
<div class="a" style="left:552px;top:608px;width:817px;height:19px;background:#fff"></div>
<div class="a" style="left:934px;top:608px;width:1px;height:19px;background:#f0f4fa"></div>
<div class="t" style="left:557px;top:608px;color:#6d6d6d">Object Type</div>
<div class="a" style="left:552px;top:628px;width:817px;height:19px;background:#fff"></div>
<div class="a" style="left:934px;top:628px;width:1px;height:19px;background:#f0f4fa"></div>
<div class="t" style="left:557px;top:628px;color:#6d6d6d">State</div>
<div class="a" style="left:526px;top:648px;width:843px;height:20px;background:#f0f4fa"></div>
<div class="t" style="left:557px;top:648px;font-weight:bold;transform:none">Options</div>
<svg style="left:532px;top:654px" width="12" height="8" viewBox="0 0 12 8" ><path d="M1.5 2 L6 6.5 L10.5 2" fill="none" stroke="#333" stroke-width="1.8"/></svg>
<div class="a" style="left:552px;top:668px;width:817px;height:19px;background:#fff"></div>
<div class="a" style="left:934px;top:668px;width:1px;height:19px;background:#f0f4fa"></div>
<div class="t" style="left:557px;top:668px;">Detail Rows Expression</div>
<div class="a" style="left:552px;top:688px;width:817px;height:19px;background:#fff"></div>
<div class="a" style="left:934px;top:688px;width:1px;height:19px;background:#f0f4fa"></div>
<div class="t" style="left:557px;top:688px;">Expression</div>
<div class="a" style="left:552px;top:708px;width:817px;height:19px;background:#fff"></div>
<div class="a" style="left:934px;top:708px;width:1px;height:19px;background:#f0f4fa"></div>
<div class="t" style="left:557px;top:708px;">KPI</div>
<div class="a" style="left:526px;top:728px;width:843px;height:20px;background:#f0f4fa"></div>
<div class="t" style="left:557px;top:728px;font-weight:bold;transform:none">Translations, Perspectives</div>
<svg style="left:532px;top:734px" width="12" height="8" viewBox="0 0 12 8" ><path d="M1.5 2 L6 6.5 L10.5 2" fill="none" stroke="#333" stroke-width="1.8"/></svg>
<div class="a" style="left:552px;top:748px;width:817px;height:19px;background:#fff"></div>
<div class="a" style="left:934px;top:748px;width:1px;height:19px;background:#f0f4fa"></div>
<div class="t" style="left:557px;top:748px;">Shown in Perspectives</div>
<svg style="left:534px;top:752px" width="8" height="12" viewBox="0 0 8 12" ><path d="M2 1.5 L6.5 6 L2 10.5" fill="none" stroke="#888" stroke-width="1.8"/></svg>
<div class="a" style="left:552px;top:768px;width:817px;height:19px;background:#fff"></div>
<div class="a" style="left:934px;top:768px;width:1px;height:19px;background:#f0f4fa"></div>
<div class="t" style="left:557px;top:768px;">Translated Descriptions</div>
<svg style="left:534px;top:772px" width="8" height="12" viewBox="0 0 8 12" ><path d="M2 1.5 L6.5 6 L2 10.5" fill="none" stroke="#888" stroke-width="1.8"/></svg>
<div class="a" style="left:552px;top:788px;width:817px;height:19px;background:#fff"></div>
<div class="a" style="left:934px;top:788px;width:1px;height:19px;background:#f0f4fa"></div>
<div class="t" style="left:557px;top:788px;">Translated Display Folders</div>
<svg style="left:534px;top:792px" width="8" height="12" viewBox="0 0 8 12" ><path d="M2 1.5 L6.5 6 L2 10.5" fill="none" stroke="#888" stroke-width="1.8"/></svg>
<div class="a" style="left:525px;top:806px;width:844px;height:5px;border-top:1px solid #a0a0a0;background:#f0f0f0"></div>
<div class="a" style="left:525px;top:811px;width:844px;height:73px;border-top:1px solid #a0a0a0;border-left:1px solid #a0a0a0;border-bottom:1px solid #a0a0a0;background:#f0f0f0"></div>
<div class="t" style="left:533px;top:813px;font-weight:bold;transform:none">Name</div>
<div class="t" style="left:533px;top:831px;">The name of this object</div>
<svg style="left:12px;top:9px" width="20" height="20" viewBox="0 0 20 20" ><path d="M4.5 3 L11.5 0.8 L18 4.5 L18 14 L11.5 18 L9 16.5" fill="#f2f2f4" stroke="#555" stroke-width="1.5"/><path d="M10 17 L10 10 L17 6" fill="none" stroke="#999" stroke-width="1.3"/><path d="M0.5 6 L7 6 Q10 6 10.5 9 L8 8.5 L6.5 8.5 L6.5 11.5 L3.5 11.5 L3.5 8.5 L0.5 8.5 Z" fill="#3a3a3a"/><rect x="3.2" y="11.5" width="3.6" height="7.5" fill="#333"/></svg>
<svg style="left:6px;top:75px" width="19" height="19" viewBox="0 0 19 19" ><path d="M1 9 L1 18 L18 18 L18 7 L11 7" fill="#f2f2f2" stroke="#d8b27a" stroke-width="1.2"/><path d="M1 18 L4 11 L18 11 L18 18 Z" fill="#e0b878"/><path d="M2 6 Q2 2 7 2.5 M5 0.5 L7.5 2.5 L5 5" fill="none" stroke="#1e6ec8" stroke-width="2"/></svg>
<svg style="left:34px;top:75px" width="19" height="19" viewBox="0 0 19 19" ><path d="M9.5 3 L17 7 L17 14 L9.5 18 L2 14 L2 7 Z M2 7 L9.5 11 L17 7 M9.5 11 L9.5 18" fill="#f4f4f4" stroke="#555" stroke-width="1.4"/><path d="M2.5 6 Q2.5 1.5 7.5 2 M6 0 L8.5 2 L6 4.5" fill="none" stroke="#5a4ac0" stroke-width="2"/></svg>
<div class="a" style="left:63px;top:75px;width:1px;height:19px;background:#c8c8c8"></div>
<svg style="left:70px;top:75px" width="20" height="20" viewBox="0 0 20 20" ><path d="M11 1 L18 4.5 L18 12.5 L11 16 L4 12.5 L4 4.5 Z M4 4.5 L11 8 L18 4.5 M11 8 L11 16" fill="none" stroke="#c890d8" stroke-width="1.1"/><path d="M0 7 L10 7 L12 9 L12 19 L0 19 Z" fill="#0a4fa0"/><rect x="3" y="7" width="5" height="4" fill="#fff"/><rect x="5" y="8" width="1.6" height="2" fill="#0a4fa0"/></svg>
<div class="a" style="left:99px;top:75px;width:1px;height:19px;background:#c8c8c8"></div>
<svg style="left:7px;top:106px" width="16" height="18" viewBox="0 0 16 18" ><path d="M1 1 L15 1 L15 4.5 L13.5 4.5 L13 3.2 L5.5 3.2 L10.5 9 L5 14.8 L13.2 14.8 L13.8 13.2 L15.3 13.2 L15 17 L1 17 L1 15.5 L7.3 9 L1 2.5 Z" fill="#333"/></svg>
<svg style="left:37px;top:106px" width="12" height="19" viewBox="0 0 12 19" ><rect x="1" y="1" width="10" height="17" fill="#f0f0f0" stroke="#444" stroke-width="1.6"/><path d="M1 6.7 L11 6.7 M1 12.3 L11 12.3" stroke="#444" stroke-width="1.6"/></svg>
<svg style="left:63px;top:107px" width="19" height="18" viewBox="0 0 19 18" ><rect x="7" y="0" width="5" height="5" fill="#333"/><rect x="3.5" y="6.5" width="5" height="5" fill="#333"/><rect x="10.5" y="6.5" width="5" height="5" fill="#333"/><rect x="0" y="13" width="5" height="5" fill="#333"/><rect x="7" y="13" width="5" height="5" fill="#333"/><rect x="14" y="13" width="5" height="5" fill="#333"/></svg>
<svg style="left:92px;top:106px" width="19" height="19" viewBox="0 0 19 19" ><path d="M1.5 5 L7.5 1.5 L13 4.5 L13 11 L7 14.5 L1.5 11.5 Z M1.5 5 L7 8 L13 4.5 M7 8 L7 14.5" fill="#f4f4f4" stroke="#555" stroke-width="1.3"/><path d="M9 10 L15 6.5 L18 9 L18 14 L12 18 L9 15.5 Z" fill="#333"/></svg>
<svg style="left:128px;top:107px" width="19" height="16" viewBox="0 0 19 16" ><path d="M1 4 L6 4 L6 1 L18 1 L18 15 L1 15 Z" fill="#f0f0f0" stroke="#333" stroke-width="1.5"/><path d="M1 15 L3.5 8 L18 8 L18 15 Z" fill="#333"/></svg>
<svg style="left:157px;top:107px" width="18" height="17" viewBox="0 0 18 17" ><path d="M1 16 L17 1" stroke="#666" stroke-width="1.5"/><path d="M1 16 L1 2 L14 2" fill="none" stroke="#999" stroke-width="1.2"/><path d="M17 4 L17 16 L3 16" fill="none" stroke="#888" stroke-width="1.2" stroke-dasharray="1.5 1.5"/></svg>
<svg style="left:195px;top:107px" width="17" height="17" viewBox="0 0 17 17" ><rect x="1" y="1" width="15" height="15" fill="#f2f2f2" stroke="#3a3a3a" stroke-width="1.8"/><path d="M6 1 L6 16 M11 1 L11 16" stroke="#3a3a3a" stroke-width="1.8"/></svg>
<svg style="left:221px;top:106px" width="20" height="19" viewBox="0 0 20 19" ><rect x="1" y="1" width="9" height="8" fill="#3a3a3a"/><text x="2.5" y="8" font-size="8" font-weight="bold" fill="#ddd" font-family="Liberation Sans">A</text><text x="1.5" y="18.5" font-size="9" font-weight="bold" fill="#333" font-family="Liberation Sans">Z</text><path d="M15 4 L15 15 M11.5 11.5 L15 15.5 L18.5 11.5" fill="none" stroke="#0a5cb0" stroke-width="2.2"/></svg>
<svg style="left:250px;top:106px" width="19" height="19" viewBox="0 0 19 19" ><circle cx="8" cy="8" r="6.5" fill="none" stroke="#3a3a3a" stroke-width="1.8"/><path d="M7 14 L7 6 L12.5 6" fill="none" stroke="#3a3a3a" stroke-width="2.2"/><path d="M17 5 L17 17 L6 17" fill="none" stroke="#555" stroke-width="1.3"/></svg>
<svg style="left:1258px;top:77px" width="16" height="13" viewBox="0 0 16 13" ><path d="M0 0 L15 0 L9.5 6 L9.5 12 L5.5 12 L5.5 6 Z" fill="#a0a0a0"/></svg>
<svg style="left:1285px;top:77px" width="20" height="15" viewBox="0 0 20 15" ><rect x="0" y="0" width="18" height="7" fill="#a0a0a0"/><path d="M5 7 L5 11.5 L10 11.5" fill="none" stroke="#a0a0a0" stroke-width="1.6"/><rect x="10.5" y="9" width="7" height="5.5" fill="#e8e8e8" stroke="#a0a0a0" stroke-width="1.4"/></svg>
<div class="a" style="left:1310px;top:70px;width:29px;height:28px;border:2px solid #2d88e0;background:#f7f7f7"></div>
<svg style="left:1315px;top:77px" width="19" height="15" viewBox="0 0 19 15" ><rect x="0.8" y="0.8" width="16.5" height="6" fill="#e6e6e6" stroke="#a0a0a0" stroke-width="1.6"/><path d="M5 7 L5 11 L10 11" fill="none" stroke="#a0a0a0" stroke-width="1.6"/><rect x="10" y="8.5" width="8" height="6.5" fill="#a0a0a0"/></svg>
<svg style="left:1344px;top:76px" width="19" height="17" viewBox="0 0 19 17" ><rect x="1" y="1" width="16.5" height="15" fill="none" stroke="#a0a0a0" stroke-width="1.6"/><path d="M1 4.8 L17.5 4.8 M1 8.5 L17.5 8.5 M1 12.2 L17.5 12.2 M5 1 L5 16" stroke="#a0a0a0" stroke-width="1.3"/></svg>
<div class="a" style="left:668px;top:538px;width:460px;height:519px;background:#f0f0f0;border:1px solid #8c8c8c;box-shadow:0 0 10px rgba(0,0,0,0.25)"></div>
<div class="a" style="left:669px;top:539px;width:458px;height:38px;background:#fff"></div>
<div class="s" style="left:679px;top:548px;color:#8a8a8a;font-size:14.5px">Object Dependencies for [Internet Total Sales]</div>
<svg style="left:685.5px;top:596.5px" width="15" height="15" viewBox="0 0 15 15" ><circle cx="7.5" cy="7.5" r="6.8" fill="#fff" stroke="#333" stroke-width="1.2"/></svg>
<div class="t" style="left:709px;top:594px;transform:scaleX(0.898)">Show objects on which [Internet Total Sales] depend</div>
<svg style="left:685.5px;top:625.5px" width="15" height="15" viewBox="0 0 15 15" ><circle cx="7.5" cy="7.5" r="6.8" fill="#fff" stroke="#333" stroke-width="1.2"/><circle cx="7.5" cy="7.5" r="3.8" fill="#222"/></svg>
<div class="t" style="left:709px;top:623px;transform:scaleX(0.898)">Show objects that depend on [Internet Total Sales]</div>
<svg style="left:685.5px;top:654.5px" width="15" height="15" viewBox="0 0 15 15" ><circle cx="7.5" cy="7.5" r="6.8" fill="#fff" stroke="#c8c8c8" stroke-width="1.2"/></svg>
<div class="t" style="left:709px;top:652px;transform:scaleX(0.898);color:#a0a0a0">Show relationships starting from [Internet Total Sales]</div>
<div class="a" style="left:668px;top:911px;width:1px;height:146px;background:#9a6a95"></div>
<div class="a" style="left:668px;top:1056px;width:460px;height:1px;background:#9a6a95"></div>
<div class="a" style="left:1127px;top:936px;width:1px;height:121px;background:#9a6a95"></div>
<div class="a" style="left:684px;top:684px;width:428px;height:321px;background:#fff;border:1px solid #828282;overflow:hidden"></div>
<div class="a" style="left:725px;top:700px;width:1px;height:236px;background:repeating-linear-gradient(180deg,#8c8c8c 0 1px,transparent 1px 2px)"></div>
<div class="a" style="left:749px;top:720px;width:1px;height:76px;background:repeating-linear-gradient(180deg,#8c8c8c 0 1px,transparent 1px 2px)"></div>
<div class="a" style="left:773px;top:740px;width:1px;height:16px;background:repeating-linear-gradient(180deg,#8c8c8c 0 1px,transparent 1px 2px)"></div>
<div class="a" style="left:797px;top:760px;width:1px;height:16px;background:repeating-linear-gradient(180deg,#8c8c8c 0 1px,transparent 1px 2px)"></div>
<div class="a" style="left:749px;top:840px;width:1px;height:16px;background:repeating-linear-gradient(180deg,#8c8c8c 0 1px,transparent 1px 2px)"></div>
<div class="a" style="left:773px;top:860px;width:1px;height:16px;background:repeating-linear-gradient(180deg,#8c8c8c 0 1px,transparent 1px 2px)"></div>
<div class="a" style="left:749px;top:900px;width:1px;height:16px;background:repeating-linear-gradient(180deg,#8c8c8c 0 1px,transparent 1px 2px)"></div>
<svg style="left:695px;top:691px" width="11" height="11" viewBox="0 0 11 11" ><defs><linearGradient id="pmg" x1="0" y1="0" x2="0" y2="1"><stop offset="0" stop-color="#f6f6f6"/><stop offset="1" stop-color="#d6d6d6"/></linearGradient></defs><rect x="0.5" y="0.5" width="10" height="10" rx="1" fill="url(#pmg)" stroke="#929292"/><path d="M2.5 5.5 L8.5 5.5" stroke="#2a4aa0" stroke-width="1.1"/></svg>
<div class="a" style="left:706px;top:695px;width:9px;height:1px;background:repeating-linear-gradient(90deg,#8c8c8c 0 1px,transparent 1px 2px)"></div>
<svg style="left:716px;top:687px" width="16" height="18" viewBox="0 0 16 18" ><path d="M1 1 L15 1 L15 4.5 L13.5 4.5 L13 3.2 L5.5 3.2 L10.5 9 L5 14.8 L13.2 14.8 L13.8 13.2 L15.3 13.2 L15 17 L1 17 L1 15.5 L7.3 9 L1 2.5 Z" fill="#3a3a3a"/></svg>
<div class="t" style="left:740px;top:686px;">[Internet Total Sales]</div>
<svg style="left:719px;top:711px" width="11" height="11" viewBox="0 0 11 11" ><defs><linearGradient id="pmg" x1="0" y1="0" x2="0" y2="1"><stop offset="0" stop-color="#f6f6f6"/><stop offset="1" stop-color="#d6d6d6"/></linearGradient></defs><rect x="0.5" y="0.5" width="10" height="10" rx="1" fill="url(#pmg)" stroke="#929292"/><path d="M2.5 5.5 L8.5 5.5" stroke="#2a4aa0" stroke-width="1.1"/></svg>
<div class="a" style="left:730px;top:715px;width:9px;height:1px;background:repeating-linear-gradient(90deg,#8c8c8c 0 1px,transparent 1px 2px)"></div>
<svg style="left:740px;top:707px" width="16" height="18" viewBox="0 0 16 18" ><path d="M1 1 L15 1 L15 4.5 L13.5 4.5 L13 3.2 L5.5 3.2 L10.5 9 L5 14.8 L13.2 14.8 L13.8 13.2 L15.3 13.2 L15 17 L1 17 L1 15.5 L7.3 9 L1 2.5 Z" fill="#3a3a3a"/></svg>
<div class="t" style="left:764px;top:706px;">[Total Sales]</div>
<svg style="left:743px;top:731px" width="11" height="11" viewBox="0 0 11 11" ><defs><linearGradient id="pmg" x1="0" y1="0" x2="0" y2="1"><stop offset="0" stop-color="#f6f6f6"/><stop offset="1" stop-color="#d6d6d6"/></linearGradient></defs><rect x="0.5" y="0.5" width="10" height="10" rx="1" fill="url(#pmg)" stroke="#929292"/><path d="M2.5 5.5 L8.5 5.5" stroke="#2a4aa0" stroke-width="1.1"/></svg>
<div class="a" style="left:754px;top:735px;width:9px;height:1px;background:repeating-linear-gradient(90deg,#8c8c8c 0 1px,transparent 1px 2px)"></div>
<svg style="left:764px;top:727px" width="16" height="18" viewBox="0 0 16 18" ><path d="M1 1 L15 1 L15 4.5 L13.5 4.5 L13 3.2 L5.5 3.2 L10.5 9 L5 14.8 L13.2 14.8 L13.8 13.2 L15.3 13.2 L15 17 L1 17 L1 15.5 L7.3 9 L1 2.5 Z" fill="#3a3a3a"/></svg>
<div class="t" style="left:788px;top:726px;">[Total Previous Quarter Sales]</div>
<svg style="left:767px;top:751px" width="11" height="11" viewBox="0 0 11 11" ><defs><linearGradient id="pmg" x1="0" y1="0" x2="0" y2="1"><stop offset="0" stop-color="#f6f6f6"/><stop offset="1" stop-color="#d6d6d6"/></linearGradient></defs><rect x="0.5" y="0.5" width="10" height="10" rx="1" fill="url(#pmg)" stroke="#929292"/><path d="M2.5 5.5 L8.5 5.5" stroke="#2a4aa0" stroke-width="1.1"/></svg>
<div class="a" style="left:778px;top:755px;width:9px;height:1px;background:repeating-linear-gradient(90deg,#8c8c8c 0 1px,transparent 1px 2px)"></div>
<svg style="left:788px;top:747px" width="16" height="18" viewBox="0 0 16 18" ><path d="M1 1 L15 1 L15 4.5 L13.5 4.5 L13 3.2 L5.5 3.2 L10.5 9 L5 14.8 L13.2 14.8 L13.8 13.2 L15.3 13.2 L15 17 L1 17 L1 15.5 L7.3 9 L1 2.5 Z" fill="#3a3a3a"/></svg>
<div class="t" style="left:812px;top:746px;">[Total Previous Quarter Sales Proportion to QTD]</div>
<div class="a" style="left:797px;top:775px;width:14px;height:1px;background:repeating-linear-gradient(90deg,#8c8c8c 0 1px,transparent 1px 2px)"></div>
<svg style="left:812px;top:767px" width="16" height="18" viewBox="0 0 16 18" ><path d="M1 1 L15 1 L15 4.5 L13.5 4.5 L13 3.2 L5.5 3.2 L10.5 9 L5 14.8 L13.2 14.8 L13.8 13.2 L15.3 13.2 L15 17 L1 17 L1 15.5 L7.3 9 L1 2.5 Z" fill="#3a3a3a"/></svg>
<div class="t" style="left:836px;top:766px;">[Total Current Quarter Sales Performance]</div>
<svg style="left:743px;top:791px" width="11" height="11" viewBox="0 0 11 11" ><defs><linearGradient id="pmg" x1="0" y1="0" x2="0" y2="1"><stop offset="0" stop-color="#f6f6f6"/><stop offset="1" stop-color="#d6d6d6"/></linearGradient></defs><rect x="0.5" y="0.5" width="10" height="10" rx="1" fill="url(#pmg)" stroke="#929292"/><path d="M2.5 5.5 L8.5 5.5" stroke="#2a4aa0" stroke-width="1.1"/><path d="M5.5 2.5 L5.5 8.5" stroke="#2a4aa0" stroke-width="1.1"/></svg>
<div class="a" style="left:754px;top:795px;width:9px;height:1px;background:repeating-linear-gradient(90deg,#8c8c8c 0 1px,transparent 1px 2px)"></div>
<svg style="left:764px;top:787px" width="16" height="18" viewBox="0 0 16 18" ><path d="M1 1 L15 1 L15 4.5 L13.5 4.5 L13 3.2 L5.5 3.2 L10.5 9 L5 14.8 L13.2 14.8 L13.8 13.2 L15.3 13.2 L15 17 L1 17 L1 15.5 L7.3 9 L1 2.5 Z" fill="#3a3a3a"/></svg>
<div class="t" style="left:788px;top:786px;">[Total Current Quarter Sales]</div>
<div class="a" style="left:725px;top:815px;width:14px;height:1px;background:repeating-linear-gradient(90deg,#8c8c8c 0 1px,transparent 1px 2px)"></div>
<svg style="left:740px;top:807px" width="16" height="18" viewBox="0 0 16 18" ><path d="M1 1 L15 1 L15 4.5 L13.5 4.5 L13 3.2 L5.5 3.2 L10.5 9 L5 14.8 L13.2 14.8 L13.8 13.2 L15.3 13.2 L15 17 L1 17 L1 15.5 L7.3 9 L1 2.5 Z" fill="#3a3a3a"/></svg>
<div class="t" style="left:764px;top:806px;">[Total Sales - Sales Territory sliced by Employee]</div>
<svg style="left:719px;top:831px" width="11" height="11" viewBox="0 0 11 11" ><defs><linearGradient id="pmg" x1="0" y1="0" x2="0" y2="1"><stop offset="0" stop-color="#f6f6f6"/><stop offset="1" stop-color="#d6d6d6"/></linearGradient></defs><rect x="0.5" y="0.5" width="10" height="10" rx="1" fill="url(#pmg)" stroke="#929292"/><path d="M2.5 5.5 L8.5 5.5" stroke="#2a4aa0" stroke-width="1.1"/></svg>
<div class="a" style="left:730px;top:835px;width:9px;height:1px;background:repeating-linear-gradient(90deg,#8c8c8c 0 1px,transparent 1px 2px)"></div>
<svg style="left:740px;top:827px" width="16" height="18" viewBox="0 0 16 18" ><path d="M1 1 L15 1 L15 4.5 L13.5 4.5 L13 3.2 L5.5 3.2 L10.5 9 L5 14.8 L13.2 14.8 L13.8 13.2 L15.3 13.2 L15 17 L1 17 L1 15.5 L7.3 9 L1 2.5 Z" fill="#3a3a3a"/></svg>
<div class="t" style="left:764px;top:826px;">[Internet Previous Quarter Sales]</div>
<svg style="left:743px;top:851px" width="11" height="11" viewBox="0 0 11 11" ><defs><linearGradient id="pmg" x1="0" y1="0" x2="0" y2="1"><stop offset="0" stop-color="#f6f6f6"/><stop offset="1" stop-color="#d6d6d6"/></linearGradient></defs><rect x="0.5" y="0.5" width="10" height="10" rx="1" fill="url(#pmg)" stroke="#929292"/><path d="M2.5 5.5 L8.5 5.5" stroke="#2a4aa0" stroke-width="1.1"/></svg>
<div class="a" style="left:754px;top:855px;width:9px;height:1px;background:repeating-linear-gradient(90deg,#8c8c8c 0 1px,transparent 1px 2px)"></div>
<svg style="left:764px;top:847px" width="16" height="18" viewBox="0 0 16 18" ><path d="M1 1 L15 1 L15 4.5 L13.5 4.5 L13 3.2 L5.5 3.2 L10.5 9 L5 14.8 L13.2 14.8 L13.8 13.2 L15.3 13.2 L15 17 L1 17 L1 15.5 L7.3 9 L1 2.5 Z" fill="#3a3a3a"/></svg>
<div class="t" style="left:788px;top:846px;">[Internet Previous Quarter Sales Proportion to QTD]</div>
<div class="a" style="left:773px;top:875px;width:14px;height:1px;background:repeating-linear-gradient(90deg,#8c8c8c 0 1px,transparent 1px 2px)"></div>
<svg style="left:788px;top:867px" width="16" height="18" viewBox="0 0 16 18" ><path d="M1 1 L15 1 L15 4.5 L13.5 4.5 L13 3.2 L5.5 3.2 L10.5 9 L5 14.8 L13.2 14.8 L13.8 13.2 L15.3 13.2 L15 17 L1 17 L1 15.5 L7.3 9 L1 2.5 Z" fill="#3a3a3a"/></svg>
<div class="t" style="left:812px;top:866px;">[Internet Current Quarter Sales Performance]</div>
<svg style="left:719px;top:891px" width="11" height="11" viewBox="0 0 11 11" ><defs><linearGradient id="pmg" x1="0" y1="0" x2="0" y2="1"><stop offset="0" stop-color="#f6f6f6"/><stop offset="1" stop-color="#d6d6d6"/></linearGradient></defs><rect x="0.5" y="0.5" width="10" height="10" rx="1" fill="url(#pmg)" stroke="#929292"/><path d="M2.5 5.5 L8.5 5.5" stroke="#2a4aa0" stroke-width="1.1"/></svg>
<div class="a" style="left:730px;top:895px;width:9px;height:1px;background:repeating-linear-gradient(90deg,#8c8c8c 0 1px,transparent 1px 2px)"></div>
<svg style="left:740px;top:887px" width="16" height="18" viewBox="0 0 16 18" ><path d="M1 1 L15 1 L15 4.5 L13.5 4.5 L13 3.2 L5.5 3.2 L10.5 9 L5 14.8 L13.2 14.8 L13.8 13.2 L15.3 13.2 L15 17 L1 17 L1 15.5 L7.3 9 L1 2.5 Z" fill="#3a3a3a"/></svg>
<div class="t" style="left:764px;top:886px;">[Internet Current Quarter Sales]</div>
<div class="a" style="left:749px;top:915px;width:14px;height:1px;background:repeating-linear-gradient(90deg,#8c8c8c 0 1px,transparent 1px 2px)"></div>
<svg style="left:764px;top:907px" width="16" height="18" viewBox="0 0 16 18" ><path d="M1 1 L15 1 L15 4.5 L13.5 4.5 L13 3.2 L5.5 3.2 L10.5 9 L5 14.8 L13.2 14.8 L13.8 13.2 L15.3 13.2 L15 17 L1 17 L1 15.5 L7.3 9 L1 2.5 Z" fill="#3a3a3a"/></svg>
<div class="t" style="left:788px;top:906px;">[Internet Current Quarter Sales Performance]</div>
<div class="a" style="left:725px;top:935px;width:14px;height:1px;background:repeating-linear-gradient(90deg,#8c8c8c 0 1px,transparent 1px 2px)"></div>
<svg style="left:740px;top:927px" width="16" height="18" viewBox="0 0 16 18" ><path d="M1 1 L15 1 L15 4.5 L13.5 4.5 L13 3.2 L5.5 3.2 L10.5 9 L5 14.8 L13.2 14.8 L13.8 13.2 L15.3 13.2 L15 17 L1 17 L1 15.5 L7.3 9 L1 2.5 Z" fill="#3a3a3a"/></svg>
<div class="t" style="left:764px;top:926px;">[Internet Previous Quarter Sales 2]</div>
<div class="a" style="left:1019px;top:1014px;width:92px;height:26px;background:#e1e1e1;border:1px solid #adadad"></div>
<div class="t" style="left:1047px;top:1017px;">Close</div>
<div class="a" style="left:1091px;top:112px;width:474px;height:824px;background:#f0f0f0;border:1px solid #8a8a8a;box-shadow:2px 4px 12px rgba(0,0,0,0.35)"></div>
<div class="a" style="left:1092px;top:113px;width:472px;height:37px;background:#fff"></div>
<svg style="left:1104px;top:122px" width="15" height="19" viewBox="0 0 15 19" ><rect x="1" y="2.5" width="13" height="15.5" rx="1.5" fill="#f4eef6" stroke="#5a3a6a" stroke-width="1.3"/><rect x="4.5" y="0.8" width="6" height="3" fill="#5a3a6a"/><path d="M3.5 7 L5 8.5 L6.5 6.5 M8 7.5 L12 7.5 M3.5 11 L5 12.5 L6.5 10.5 M8 11.5 L12 11.5 M8 15 L12 15" fill="none" stroke="#5a3a6a" stroke-width="1"/></svg>
<div class="s" style="left:1127px;top:121px;color:#8a8a8a;font-size:14.6px">Best Practice Analyzer</div>
<svg style="left:1412px;top:131px" width="12" height="1" viewBox="0 0 12 1" ><rect width="12" height="1" fill="#8a8a8a"/></svg>
<svg style="left:1470px;top:126px" width="12" height="12" viewBox="0 0 12 12" ><rect x="0.5" y="0.5" width="11" height="11" fill="none" stroke="#8a8a8a" stroke-width="1"/></svg>
<svg style="left:1529px;top:126px" width="12" height="12" viewBox="0 0 12 12" ><path d="M0.5 0.5 L11.5 11.5 M11.5 0.5 L0.5 11.5" stroke="#8a8a8a" stroke-width="1"/></svg>
<div class="a" style="left:1092px;top:150px;width:472px;height:36px;background:linear-gradient(#fbfbfb,#efefef)"></div>
<svg style="left:1095px;top:156px" width="3" height="22" viewBox="0 0 3 22" ><path d="M1.5 1 L1.5 21" stroke="#a0a0a0" stroke-width="2" stroke-dasharray="2 2"/></svg>
<svg style="left:1107px;top:157px" width="20" height="18" viewBox="0 0 20 18" ><path d="M1 3 L3 5 L6 1 M1 9 L3 11 L6 7 M1 15 L3 17 L6 13" fill="none" stroke="#333" stroke-width="1.4"/><path d="M8 3.5 L19 3.5 M8 9.5 L19 9.5 M8 15.5 L19 15.5" stroke="#333" stroke-width="1.6"/></svg>
<div class="a" style="left:1137px;top:157px;width:1px;height:20px;background:#c4c4c4"></div>
<svg style="left:1143px;top:157px" width="18" height="19" viewBox="0 0 18 19" ><path d="M1 5 L7 5 M4.5 2 L7.5 5 L4.5 8" fill="none" stroke="#a0a0a0" stroke-width="1.8"/><rect x="7" y="9" width="9" height="9" fill="#a8a8a8"/></svg>
<svg style="left:1171px;top:160px" width="20" height="12" viewBox="0 0 20 12" ><path d="M1 4 Q10 12 19 4" fill="none" stroke="#b0b0b0" stroke-width="1.6"/><path d="M4 7 L2.5 10 M10 9 L10 12 M16 7 L17.5 10" stroke="#b0b0b0" stroke-width="1.3"/></svg>
<div class="a" style="left:1201px;top:157px;width:1px;height:20px;background:#c4c4c4"></div>
<svg style="left:1209px;top:156px" width="18" height="20" viewBox="0 0 18 20" ><path d="M4 2 L16 2 Q17.5 2 17.5 4 L17.5 5 L14 5 L14 17 Q14 19 12 19 L1 19 L1 17 L4 17 Z" fill="none" stroke="#b0b0b0" stroke-width="1.6"/></svg>
<svg style="left:1238px;top:157px" width="19" height="19" viewBox="0 0 19 19" ><path d="M2 17 L11 8" stroke="#b0b0b0" stroke-width="3"/><path d="M10 9 L14 5 Q15 2 18 2 L17 5 L14 6" fill="none" stroke="#b0b0b0" stroke-width="1.6"/></svg>
<svg style="left:1363px;top:158px" width="15" height="15" viewBox="0 0 15 15" ><rect x="4.5" y="0.5" width="10" height="10" fill="#fff" stroke="#555"/><rect x="2.5" y="2.5" width="10" height="10" fill="#fff" stroke="#555"/><rect x="0.5" y="4.5" width="10" height="10" fill="#fff" stroke="#555"/><path d="M3 9.5 L8 9.5" stroke="#2a5ab0" stroke-width="1.4"/><path d="M5.5 7 L5.5 12" stroke="#2a5ab0" stroke-width="1.4"/></svg>
<svg style="left:1393px;top:158px" width="15" height="15" viewBox="0 0 15 15" ><rect x="4.5" y="0.5" width="10" height="10" fill="#fff" stroke="#555"/><rect x="2.5" y="2.5" width="10" height="10" fill="#fff" stroke="#555"/><rect x="0.5" y="4.5" width="10" height="10" fill="#fff" stroke="#555"/><path d="M3 9.5 L8 9.5" stroke="#2a5ab0" stroke-width="1.4"/></svg>
<div class="a" style="left:1419px;top:156px;width:1px;height:22px;background:#c4c4c4"></div>
<div class="s" style="left:1428px;top:156px;font-size:14.6px">Show ignored</div>
<div class="a" style="left:1532px;top:156px;width:1px;height:22px;background:#c4c4c4"></div>
<svg style="left:1538px;top:155px" width="22" height="22" viewBox="0 0 22 22" ><path d="M14.5 4.2 A7.8 7.8 0 1 1 6.8 4.6" fill="none" stroke="#1663b4" stroke-width="2.6"/><path d="M3 2.5 L8.5 2.5 L8.5 8" fill="none" stroke="#1663b4" stroke-width="2.6"/></svg>
<div class="a" style="left:1092px;top:186px;width:472px;height:721px;background:#fff;border-top:2px solid #6e6e6e"></div>
<div class="s" style="left:1100px;top:190px;font-size:14.6px">Object</div>
<div class="s" style="left:1462px;top:190px;font-size:14.6px">Type</div>
<div class="a" style="left:1455px;top:189px;width:1px;height:21px;background:#e5e5e5"></div>
<div class="a" style="left:1544px;top:188px;width:20px;height:719px;background:#f0f0f0"></div>
<div class="a" style="left:1545px;top:210px;width:18px;height:545px;background:#cdcdcd"></div>
<svg style="left:1547px;top:194px" width="12" height="8" viewBox="0 0 12 8" ><path d="M1.5 6 L6 1.5 L10.5 6" fill="none" stroke="#5a5a5a" stroke-width="2"/></svg>
<svg style="left:1547px;top:889px" width="12" height="8" viewBox="0 0 12 8" ><path d="M1.5 2 L6 6.5 L10.5 2" fill="none" stroke="#5a5a5a" stroke-width="2"/></svg>
<div class="a" style="left:1092px;top:211px;width:452px;height:696px;overflow:hidden">
<div class="a" style="left:0;top:20px;width:452px;height:1px;background:#edf0f5"></div>
<svg style="left:9.5px;top:7px" width="11" height="11" viewBox="0 0 11 11" ><defs><linearGradient id="pmg" x1="0" y1="0" x2="0" y2="1"><stop offset="0" stop-color="#f6f6f6"/><stop offset="1" stop-color="#d6d6d6"/></linearGradient></defs><rect x="0.5" y="0.5" width="10" height="10" rx="1" fill="url(#pmg)" stroke="#929292"/><path d="M2.5 5.5 L8.5 5.5" stroke="#2a4aa0" stroke-width="1.1"/><path d="M5.5 2.5 L5.5 8.5" stroke="#2a4aa0" stroke-width="1.1"/></svg>
<div class="s" style="left:27px;top:1.5px;font-weight:bold;font-size:14.5px;transform:scaleX(1);transform-origin:0 0">Column references should be fully qualified (34 objects)</div>
<div class="a" style="left:0;top:40px;width:452px;height:1px;background:#edf0f5"></div>
<svg style="left:9.5px;top:27px" width="11" height="11" viewBox="0 0 11 11" ><defs><linearGradient id="pmg" x1="0" y1="0" x2="0" y2="1"><stop offset="0" stop-color="#f6f6f6"/><stop offset="1" stop-color="#d6d6d6"/></linearGradient></defs><rect x="0.5" y="0.5" width="10" height="10" rx="1" fill="url(#pmg)" stroke="#929292"/><path d="M2.5 5.5 L8.5 5.5" stroke="#2a4aa0" stroke-width="1.1"/><path d="M5.5 2.5 L5.5 8.5" stroke="#2a4aa0" stroke-width="1.1"/></svg>
<div class="s" style="left:27px;top:21.5px;font-weight:bold;font-size:14.5px;transform:scaleX(1);transform-origin:0 0">Avoid division (use DIVIDE function instead) (13 objects)</div>
<div class="a" style="left:0;top:60px;width:452px;height:1px;background:#edf0f5"></div>
<svg style="left:9.5px;top:47px" width="11" height="11" viewBox="0 0 11 11" ><defs><linearGradient id="pmg" x1="0" y1="0" x2="0" y2="1"><stop offset="0" stop-color="#f6f6f6"/><stop offset="1" stop-color="#d6d6d6"/></linearGradient></defs><rect x="0.5" y="0.5" width="10" height="10" rx="1" fill="url(#pmg)" stroke="#929292"/><path d="M2.5 5.5 L8.5 5.5" stroke="#2a4aa0" stroke-width="1.1"/><path d="M5.5 2.5 L5.5 8.5" stroke="#2a4aa0" stroke-width="1.1"/></svg>
<div class="s" style="left:27px;top:41.5px;font-weight:bold;font-size:14.5px;transform:scaleX(1.008);transform-origin:0 0">Provide format string for visible numeric columns (174 obj...</div>
<div class="a" style="left:0;top:80px;width:452px;height:1px;background:#edf0f5"></div>
<svg style="left:9.5px;top:67px" width="11" height="11" viewBox="0 0 11 11" ><defs><linearGradient id="pmg" x1="0" y1="0" x2="0" y2="1"><stop offset="0" stop-color="#f6f6f6"/><stop offset="1" stop-color="#d6d6d6"/></linearGradient></defs><rect x="0.5" y="0.5" width="10" height="10" rx="1" fill="url(#pmg)" stroke="#929292"/><path d="M2.5 5.5 L8.5 5.5" stroke="#2a4aa0" stroke-width="1.1"/><path d="M5.5 2.5 L5.5 8.5" stroke="#2a4aa0" stroke-width="1.1"/></svg>
<div class="s" style="left:27px;top:61.5px;font-weight:bold;font-size:14.5px;transform:scaleX(1.007);transform-origin:0 0">Provide format string for visible numeric measures (14 obj...</div>
<div class="a" style="left:0;top:100px;width:452px;height:1px;background:#edf0f5"></div>
<svg style="left:9.5px;top:87px" width="11" height="11" viewBox="0 0 11 11" ><defs><linearGradient id="pmg" x1="0" y1="0" x2="0" y2="1"><stop offset="0" stop-color="#f6f6f6"/><stop offset="1" stop-color="#d6d6d6"/></linearGradient></defs><rect x="0.5" y="0.5" width="10" height="10" rx="1" fill="url(#pmg)" stroke="#929292"/><path d="M2.5 5.5 L8.5 5.5" stroke="#2a4aa0" stroke-width="1.1"/><path d="M5.5 2.5 L5.5 8.5" stroke="#2a4aa0" stroke-width="1.1"/></svg>
<div class="s" style="left:27px;top:81.5px;font-weight:bold;font-size:14.5px;transform:scaleX(0.994);transform-origin:0 0">Disable attribute hierachies to decrease processing (40 obj...</div>
<div class="a" style="left:0;top:120px;width:452px;height:1px;background:#edf0f5"></div>
<svg style="left:9.5px;top:107px" width="11" height="11" viewBox="0 0 11 11" ><defs><linearGradient id="pmg" x1="0" y1="0" x2="0" y2="1"><stop offset="0" stop-color="#f6f6f6"/><stop offset="1" stop-color="#d6d6d6"/></linearGradient></defs><rect x="0.5" y="0.5" width="10" height="10" rx="1" fill="url(#pmg)" stroke="#929292"/><path d="M2.5 5.5 L8.5 5.5" stroke="#2a4aa0" stroke-width="1.1"/></svg>
<div class="s" style="left:27px;top:101.5px;font-weight:bold;font-size:14.5px;transform:scaleX(1);transform-origin:0 0">Do not use floating point data types (25 objects)</div>
<div class="a" style="left:0;top:140px;width:452px;height:1px;background:#edf0f5"></div>
<div class="s" style="left:35px;top:122px;font-size:14.8px">&#x27;Product&#x27;[Weight]</div>
<div class="s" style="left:370px;top:122px;font-size:14.8px">Column</div>
<div class="a" style="left:0;top:160px;width:452px;height:1px;background:#edf0f5"></div>
<div class="s" style="left:35px;top:142px;font-size:14.8px">&#x27;Promotion&#x27;[DiscountPct]</div>
<div class="s" style="left:370px;top:142px;font-size:14.8px">Column</div>
<div class="a" style="left:0;top:180px;width:452px;height:1px;background:#edf0f5"></div>
<div class="s" style="left:35px;top:162px;font-size:14.8px">&#x27;Internet Sales&#x27;[Unit Price Discount Pct]</div>
<div class="s" style="left:370px;top:162px;font-size:14.8px">Column</div>
<div class="a" style="left:0;top:200px;width:452px;height:1px;background:#edf0f5"></div>
<div class="s" style="left:35px;top:182px;font-size:14.8px">&#x27;Reseller Sales&#x27;[Unit Price Discount Pct]</div>
<div class="s" style="left:370px;top:182px;font-size:14.8px">Column</div>
<div class="a" style="left:0;top:220px;width:452px;height:1px;background:#edf0f5"></div>
<div class="s" style="left:35px;top:202px;font-size:14.8px">&#x27;Date Template&#x27;[Calendar QuarterNumber]</div>
<div class="s" style="left:370px;top:202px;font-size:14.8px">Column</div>
<div class="a" style="left:0;top:240px;width:452px;height:1px;background:#edf0f5"></div>
<div class="s" style="left:35px;top:222px;font-size:14.8px">&#x27;Date Template&#x27;[Calendar YearQuarterNumber]</div>
<div class="s" style="left:370px;top:222px;font-size:14.8px">Column</div>
<div class="a" style="left:0;top:260px;width:452px;height:1px;background:#edf0f5"></div>
<div class="s" style="left:35px;top:242px;font-size:14.8px">&#x27;Date Template&#x27;[Calendar RelativeWeekPos]</div>
<div class="s" style="left:370px;top:242px;font-size:14.8px">Column</div>
<div class="a" style="left:0;top:280px;width:452px;height:1px;background:#edf0f5"></div>
<div class="s" style="left:35px;top:262px;font-size:14.8px">&#x27;Date Template&#x27;[Calendar RelativeMonthPos]</div>
<div class="s" style="left:370px;top:262px;font-size:14.8px">Column</div>
<div class="a" style="left:0;top:300px;width:452px;height:1px;background:#edf0f5"></div>
<div class="s" style="left:35px;top:282px;font-size:14.8px">&#x27;Date Template&#x27;[Calendar RelativeQuarterPos]</div>
<div class="s" style="left:370px;top:282px;font-size:14.8px">Column</div>
<div class="a" style="left:0;top:320px;width:452px;height:1px;background:#edf0f5"></div>
<div class="s" style="left:35px;top:302px;font-size:14.8px">&#x27;Date Template&#x27;[Calendar RelativeYearPos]</div>
<div class="s" style="left:370px;top:302px;font-size:14.8px">Column</div>
<div class="a" style="left:0;top:340px;width:452px;height:1px;background:#edf0f5"></div>
<div class="s" style="left:35px;top:322px;font-size:14.8px">&#x27;Date Template&#x27;[Fiscal QuarterNumber]</div>
<div class="s" style="left:370px;top:322px;font-size:14.8px">Column</div>
<div class="a" style="left:0;top:360px;width:452px;height:1px;background:#edf0f5"></div>
<div class="s" style="left:35px;top:342px;font-size:14.8px">&#x27;Date Template&#x27;[Fiscal YearQuarterNumber]</div>
<div class="s" style="left:370px;top:342px;font-size:14.8px">Column</div>
<div class="a" style="left:0;top:380px;width:452px;height:1px;background:#edf0f5"></div>
<div class="s" style="left:35px;top:362px;font-size:14.8px">&#x27;Date Template&#x27;[Fiscal RelativeWeekPos]</div>
<div class="s" style="left:370px;top:362px;font-size:14.8px">Column</div>
<div class="a" style="left:0;top:400px;width:452px;height:1px;background:#edf0f5"></div>
<div class="s" style="left:35px;top:382px;font-size:14.8px">&#x27;Date Template&#x27;[Fiscal RelativeMonthPos]</div>
<div class="s" style="left:370px;top:382px;font-size:14.8px">Column</div>
<div class="a" style="left:0;top:420px;width:452px;height:1px;background:#edf0f5"></div>
<div class="s" style="left:35px;top:402px;font-size:14.8px">&#x27;Date Template&#x27;[Fiscal RelativeQuarterPos]</div>
<div class="s" style="left:370px;top:402px;font-size:14.8px">Column</div>
<div class="a" style="left:0;top:440px;width:452px;height:1px;background:#edf0f5"></div>
<div class="s" style="left:35px;top:422px;font-size:14.8px">&#x27;Date Template&#x27;[Fiscal RelativeYearPos]</div>
<div class="s" style="left:370px;top:422px;font-size:14.8px">Column</div>
<div class="a" style="left:0;top:460px;width:452px;height:1px;background:#edf0f5"></div>
<div class="s" style="left:35px;top:442px;font-size:14.8px">&#x27;Date Template&#x27;[FW QuarterNumber]</div>
<div class="s" style="left:370px;top:442px;font-size:14.8px">Column</div>
<div class="a" style="left:0;top:480px;width:452px;height:1px;background:#edf0f5"></div>
<div class="s" style="left:35px;top:462px;font-size:14.8px">&#x27;Date Template&#x27;[FW YearQuarterNumber]</div>
<div class="s" style="left:370px;top:462px;font-size:14.8px">Column</div>
<div class="a" style="left:0;top:500px;width:452px;height:1px;background:#edf0f5"></div>
<div class="s" style="left:35px;top:482px;font-size:14.8px">&#x27;Date Template&#x27;[FW MonthNumber]</div>
<div class="s" style="left:370px;top:482px;font-size:14.8px">Column</div>
<div class="a" style="left:0;top:520px;width:452px;height:1px;background:#edf0f5"></div>
<div class="s" style="left:35px;top:502px;font-size:14.8px">&#x27;Date Template&#x27;[FW YearMonthNumber]</div>
<div class="s" style="left:370px;top:502px;font-size:14.8px">Column</div>
<div class="a" style="left:0;top:540px;width:452px;height:1px;background:#edf0f5"></div>
<div class="s" style="left:35px;top:522px;font-size:14.8px">&#x27;Date Template&#x27;[FW PeriodNumber]</div>
<div class="s" style="left:370px;top:522px;font-size:14.8px">Column</div>
<div class="a" style="left:0;top:560px;width:452px;height:1px;background:#edf0f5"></div>
<div class="s" style="left:35px;top:542px;font-size:14.8px">&#x27;Date Template&#x27;[FW RelativeWeekPos]</div>
<div class="s" style="left:370px;top:542px;font-size:14.8px">Column</div>
<div class="a" style="left:0;top:580px;width:452px;height:1px;background:#edf0f5"></div>
<div class="s" style="left:35px;top:562px;font-size:14.8px">&#x27;Date Template&#x27;[FW RelativeMonthPos]</div>
<div class="s" style="left:370px;top:562px;font-size:14.8px">Column</div>
<div class="a" style="left:0;top:600px;width:452px;height:1px;background:#edf0f5"></div>
<div class="s" style="left:35px;top:582px;font-size:14.8px">&#x27;Date Template&#x27;[FW RelativeQuarterPos]</div>
<div class="s" style="left:370px;top:582px;font-size:14.8px">Column</div>
<div class="a" style="left:0;top:620px;width:452px;height:1px;background:#edf0f5"></div>
<div class="s" style="left:35px;top:602px;font-size:14.8px">&#x27;Date Template&#x27;[FW RelativeYearPos]</div>
<div class="s" style="left:370px;top:602px;font-size:14.8px">Column</div>
<div class="a" style="left:0;top:640px;width:452px;height:1px;background:#edf0f5"></div>
<svg style="left:9.5px;top:627px" width="11" height="11" viewBox="0 0 11 11" ><defs><linearGradient id="pmg" x1="0" y1="0" x2="0" y2="1"><stop offset="0" stop-color="#f6f6f6"/><stop offset="1" stop-color="#d6d6d6"/></linearGradient></defs><rect x="0.5" y="0.5" width="10" height="10" rx="1" fill="url(#pmg)" stroke="#929292"/><path d="M2.5 5.5 L8.5 5.5" stroke="#2a4aa0" stroke-width="1.1"/><path d="M5.5 2.5 L5.5 8.5" stroke="#2a4aa0" stroke-width="1.1"/></svg>
<div class="s" style="left:27px;top:621.5px;font-weight:bold;font-size:14.5px;transform:scaleX(1);transform-origin:0 0">Don&#x27;t summarize numeric columns (84 objects)</div>
<div class="a" style="left:0;top:660px;width:452px;height:1px;background:#edf0f5"></div>
<svg style="left:9.5px;top:647px" width="11" height="11" viewBox="0 0 11 11" ><defs><linearGradient id="pmg" x1="0" y1="0" x2="0" y2="1"><stop offset="0" stop-color="#f6f6f6"/><stop offset="1" stop-color="#d6d6d6"/></linearGradient></defs><rect x="0.5" y="0.5" width="10" height="10" rx="1" fill="url(#pmg)" stroke="#929292"/><path d="M2.5 5.5 L8.5 5.5" stroke="#2a4aa0" stroke-width="1.1"/><path d="M5.5 2.5 L5.5 8.5" stroke="#2a4aa0" stroke-width="1.1"/></svg>
<div class="s" style="left:27px;top:641.5px;font-weight:bold;font-size:14.5px;transform:scaleX(1);transform-origin:0 0">Add objects to perspectives (119 objects)</div>
<div class="a" style="left:0;top:680px;width:452px;height:1px;background:#edf0f5"></div>
<svg style="left:9.5px;top:667px" width="11" height="11" viewBox="0 0 11 11" ><defs><linearGradient id="pmg" x1="0" y1="0" x2="0" y2="1"><stop offset="0" stop-color="#f6f6f6"/><stop offset="1" stop-color="#d6d6d6"/></linearGradient></defs><rect x="0.5" y="0.5" width="10" height="10" rx="1" fill="url(#pmg)" stroke="#929292"/><path d="M2.5 5.5 L8.5 5.5" stroke="#2a4aa0" stroke-width="1.1"/><path d="M5.5 2.5 L5.5 8.5" stroke="#2a4aa0" stroke-width="1.1"/></svg>
<div class="s" style="left:27px;top:661.5px;font-weight:bold;font-size:14.5px;transform:scaleX(0.979);transform-origin:0 0">Organize columns and hierarchies in display folders (8 obje...</div>
<div class="a" style="left:0;top:700px;width:452px;height:1px;background:#edf0f5"></div>
<svg style="left:9.5px;top:687px" width="11" height="11" viewBox="0 0 11 11" ><defs><linearGradient id="pmg" x1="0" y1="0" x2="0" y2="1"><stop offset="0" stop-color="#f6f6f6"/><stop offset="1" stop-color="#d6d6d6"/></linearGradient></defs><rect x="0.5" y="0.5" width="10" height="10" rx="1" fill="url(#pmg)" stroke="#929292"/><path d="M2.5 5.5 L8.5 5.5" stroke="#2a4aa0" stroke-width="1.1"/><path d="M5.5 2.5 L5.5 8.5" stroke="#2a4aa0" stroke-width="1.1"/></svg>
<div class="s" style="left:27px;top:681.5px;font-weight:bold;font-size:14.5px;transform:scaleX(0.982);transform-origin:0 0">Organize measures in display folders (4 objects)</div>
</div>
<div class="a" style="left:1092px;top:906px;width:472px;height:1px;background:#828282"></div>
<div class="a" style="left:1369px;top:112px;width:196px;height:1px;background:#9a6a95"></div>
<div class="a" style="left:1127px;top:935px;width:276px;height:1px;background:#9a6a95"></div>
<div class="s" style="left:1097px;top:912px;font-size:14.6px">944 objects in violation of 17 Best Practice rules.</div>
<svg style="left:1546px;top:915px" width="14" height="14" viewBox="0 0 14 14" ><rect x="2" y="10" width="2" height="2" fill="#9a9a9a"/><rect x="7" y="10" width="2" height="2" fill="#9a9a9a"/><rect x="12" y="10" width="2" height="2" fill="#9a9a9a"/><rect x="7" y="5" width="2" height="2" fill="#9a9a9a"/><rect x="12" y="5" width="2" height="2" fill="#9a9a9a"/><rect x="12" y="0" width="2" height="2" fill="#9a9a9a"/></svg>
<div class="a" style="left:1582px;top:0;width:1px;height:993px;background:#eea6de"></div>
</body></html>
